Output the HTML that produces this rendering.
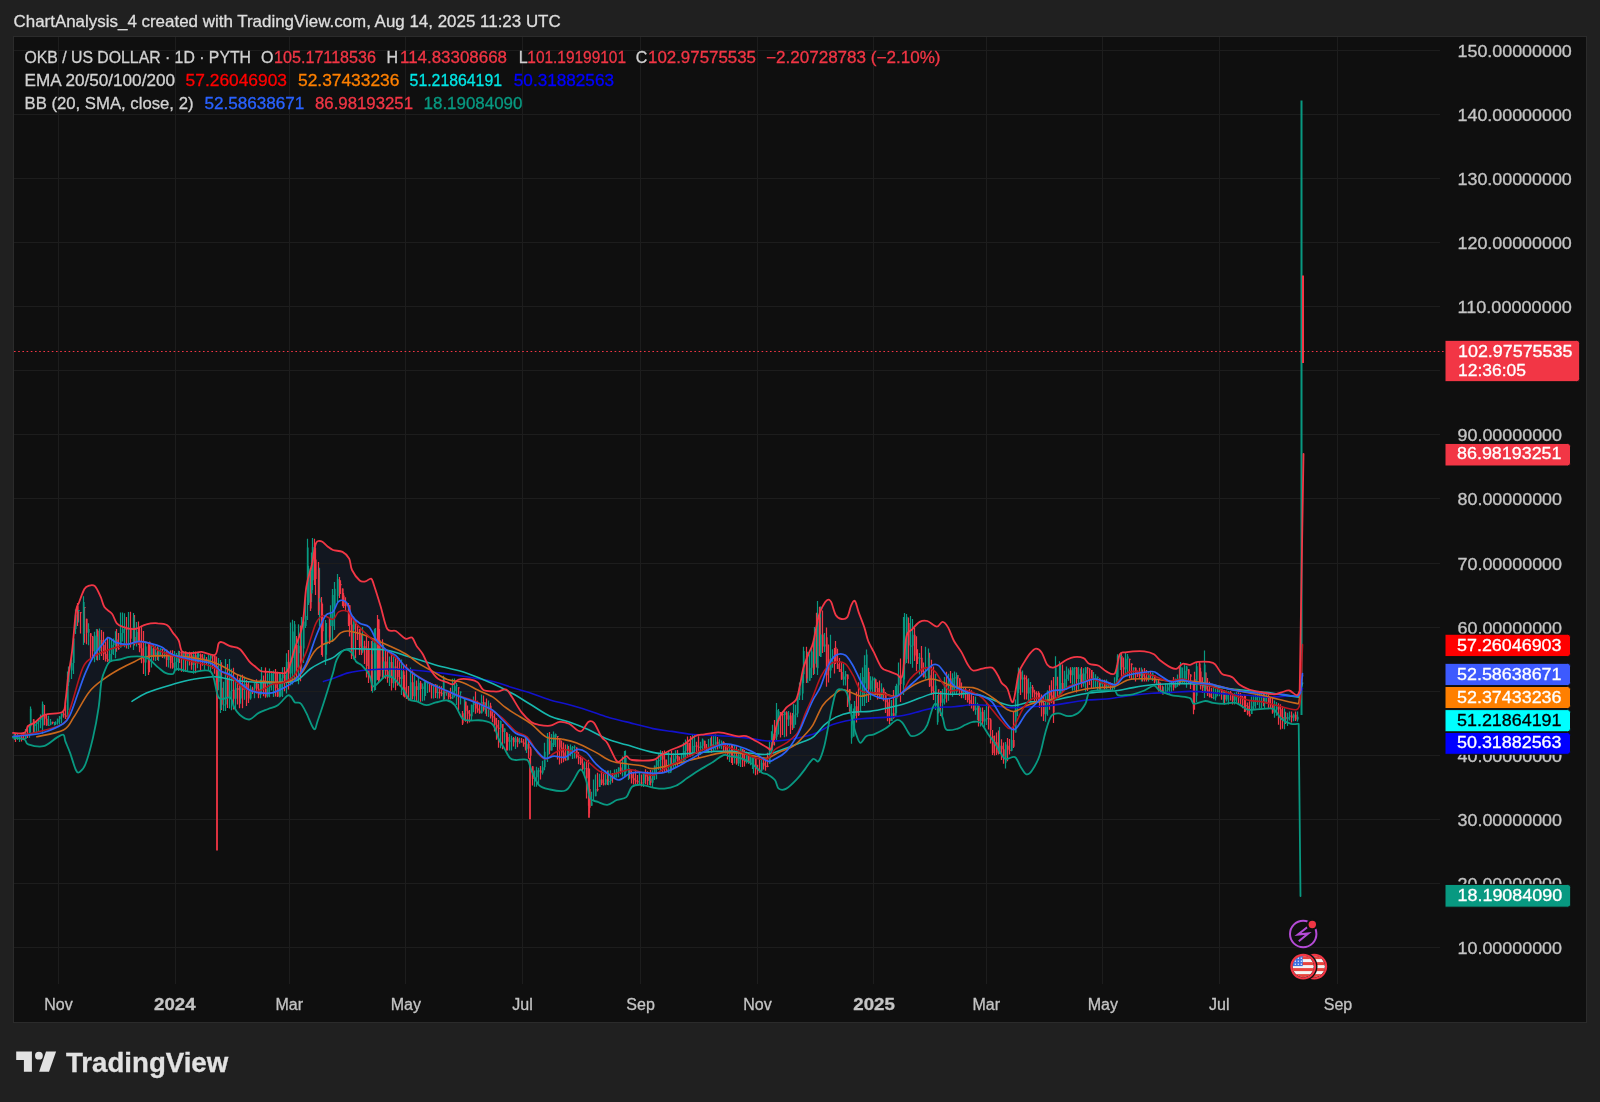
<!DOCTYPE html><html><head><meta charset="utf-8"><style>html,body{margin:0;padding:0}body{width:1600px;height:1102px;background:#202020;overflow:hidden;font-family:"Liberation Sans",sans-serif}svg{position:absolute;left:0;top:0}text{font-family:"Liberation Sans",sans-serif}</style></head><body>
<svg width="1600" height="1102" viewBox="0 0 1600 1102" style="will-change:transform">
<rect x="13.5" y="36.5" width="1573" height="986" fill="#0f0f0f" stroke="#2b2b2b" stroke-width="1"/>
<path d="M13.0 732.9C14.9 732.9 21.9 734.0 24.4 732.9C26.9 731.8 26.4 727.8 28.2 726.0C29.9 724.2 32.2 724.3 34.9 722.4C37.6 720.5 39.8 716.5 44.4 714.8C49.0 713.0 59.0 714.1 62.5 711.9C66.0 709.7 64.5 707.3 65.4 701.4C66.4 695.5 67.1 685.0 68.2 676.7C69.3 668.5 70.7 662.7 72.0 651.9C73.3 641.1 74.8 620.0 75.9 611.9C77.0 603.8 77.3 607.1 78.7 603.3C80.1 599.5 82.7 592.0 84.4 589.0C86.2 586.0 87.5 586.1 89.2 585.6C91.0 585.1 93.0 584.4 94.9 586.2C96.8 588.1 99.0 593.2 100.6 596.7C102.2 600.2 102.5 604.2 104.4 607.1C106.3 610.0 109.9 611.1 112.0 613.8C114.1 616.5 114.9 621.1 116.8 623.3C118.7 625.5 120.5 626.1 123.5 627.1C126.5 628.1 131.1 629.5 134.9 629.0C138.7 628.5 142.5 625.2 146.3 624.3C150.1 623.3 154.3 623.1 157.8 623.3C161.3 623.4 164.8 623.6 167.3 625.2C169.8 626.8 171.1 630.4 173.0 632.9C174.9 635.4 177.1 637.3 178.7 640.5C180.3 643.7 179.9 649.8 182.5 651.9C185.1 654.0 190.8 652.9 194.0 652.9C197.2 652.9 198.1 651.6 201.6 651.9C205.1 652.2 212.1 656.2 214.9 654.8C217.8 653.4 217.4 645.4 218.7 643.3C220.0 641.2 220.6 641.9 222.5 642.4C224.4 642.9 227.2 645.1 230.1 646.2C233.0 647.3 236.5 646.5 239.7 649.0C242.9 651.5 246.7 658.5 249.2 661.4C251.7 664.3 253.0 664.6 254.9 666.2C256.8 667.8 258.4 670.0 260.6 671.0C262.8 672.0 265.0 671.6 268.2 671.9C271.4 672.2 276.8 672.7 279.7 672.9C282.6 673.1 283.8 673.9 285.4 672.9C287.0 671.9 287.6 671.2 289.2 667.1C290.8 663.0 292.7 655.1 294.9 648.1C297.1 641.1 300.6 635.4 302.5 625.2C304.4 615.0 304.7 597.2 306.3 587.1C307.9 577.0 310.4 571.6 312.0 564.3C313.6 557.0 314.3 547.1 315.9 543.3C317.5 539.5 319.7 540.9 321.6 541.4C323.5 541.9 325.4 544.8 327.3 546.2C329.2 547.6 330.5 549.0 333.0 550.0C335.5 551.0 339.8 550.5 342.5 551.9C345.2 553.3 347.6 555.6 349.2 558.6C350.8 561.6 350.2 566.4 352.0 570.0C353.8 573.6 357.5 578.6 359.7 580.5C361.9 582.4 363.5 581.7 365.4 581.4C367.3 581.1 369.7 578.0 371.1 578.6C372.5 579.2 372.4 580.6 374.0 585.2C375.6 589.8 378.4 598.9 380.6 606.2C382.8 613.5 384.8 624.9 387.3 629.0C389.9 633.1 392.9 629.4 395.9 631.0C398.9 632.6 402.7 637.5 405.4 638.6C408.1 639.7 410.1 636.3 412.0 637.6C413.9 638.9 415.1 643.5 416.8 646.2C418.6 648.9 420.3 650.0 422.5 653.8C424.7 657.6 427.6 664.9 430.1 669.0C432.7 673.1 434.9 676.4 437.8 678.6C440.7 680.8 444.8 681.5 447.3 682.4C449.8 683.3 451.1 684.8 453.0 684.3C454.9 683.8 455.8 680.3 458.7 679.5C461.6 678.7 466.9 679.0 470.1 679.5C473.3 680.0 475.6 680.6 477.8 682.4C480.0 684.1 481.0 688.5 483.5 690.0C486.0 691.5 490.5 691.2 493.0 691.4C495.5 691.6 496.5 691.7 498.7 691.4C500.9 691.1 504.1 688.5 506.3 689.5C508.5 690.5 509.4 693.3 512.0 697.1C514.5 700.9 518.4 708.3 521.6 712.4C524.8 716.5 528.2 719.8 531.1 721.9C534.0 724.0 535.5 724.2 538.7 724.8C541.9 725.4 546.6 726.2 550.1 725.7C553.6 725.2 556.5 722.2 559.7 721.9C562.9 721.6 565.7 722.2 569.2 723.8C572.7 725.4 577.4 731.7 580.6 731.4C583.8 731.1 586.0 723.3 588.2 721.9C590.4 720.5 591.8 720.4 594.0 722.9C596.2 725.4 599.4 733.8 601.6 737.1C603.8 740.4 605.1 739.4 607.3 742.9C609.5 746.4 613.0 754.9 614.9 758.1C616.8 761.3 616.8 762.2 618.7 761.9C620.6 761.6 624.1 756.5 626.3 756.2C628.5 755.9 627.5 759.4 632.0 760.0C636.5 760.6 648.2 760.8 653.0 760.0C657.8 759.2 657.4 757.0 660.6 755.2C663.8 753.5 668.2 751.2 672.0 749.5C675.8 747.8 679.7 747.0 683.5 744.8C687.3 742.6 691.4 738.0 694.9 736.2C698.4 734.5 700.6 734.9 704.4 734.3C708.2 733.7 714.3 732.6 717.8 732.4C721.3 732.2 722.2 732.7 725.4 733.3C728.6 733.9 733.3 735.7 736.8 736.2C740.3 736.7 743.1 735.4 746.3 736.2C749.5 737.0 752.4 739.1 755.9 741.0C759.4 742.9 764.8 746.3 767.3 747.6C769.8 748.9 769.8 751.1 771.1 748.6C772.4 746.1 773.6 737.3 774.9 732.4C776.2 727.5 776.8 723.1 778.7 719.0C780.6 714.9 783.4 710.8 786.3 707.6C789.2 704.4 793.7 703.5 795.9 700.0C798.1 696.5 798.4 692.1 799.7 686.7C801.0 681.3 801.9 673.3 803.5 667.6C805.1 661.9 807.6 656.5 809.2 652.4C810.8 648.3 811.4 648.9 813.0 642.9C814.6 636.9 817.1 622.2 818.7 616.2C820.3 610.2 821.1 609.4 822.5 606.7C823.9 604.0 825.9 600.8 827.3 600.0C828.7 599.2 829.7 599.4 831.1 601.9C832.5 604.4 834.1 612.4 835.9 615.2C837.6 618.1 839.7 618.7 841.6 619.0C843.5 619.3 845.7 619.3 847.3 617.1C848.9 614.9 849.8 608.4 851.1 605.7C852.4 603.0 853.6 599.9 854.9 601.0C856.2 602.1 857.1 608.0 858.7 612.4C860.3 616.8 862.8 622.8 864.4 627.6C866.0 632.4 866.6 636.9 868.2 641.0C869.8 645.1 871.8 648.0 874.0 652.4C876.2 656.8 879.1 664.4 881.6 667.6C884.1 670.8 886.7 670.3 889.2 671.4C891.7 672.5 894.6 673.7 896.8 674.3C899.0 674.9 900.9 681.4 902.5 675.2C904.1 669.0 904.7 644.7 906.3 637.1C907.9 629.5 909.8 632.0 912.0 629.5C914.2 627.0 917.2 623.3 919.7 621.9C922.2 620.5 924.4 620.2 927.3 621.0C930.1 621.8 934.3 626.6 936.8 626.7C939.3 626.9 940.6 621.8 942.5 621.9C944.4 622.0 946.3 624.4 948.2 627.6C950.1 630.8 951.8 636.9 954.0 641.0C956.2 645.1 959.4 648.6 961.6 652.4C963.8 656.2 965.4 660.8 967.3 663.8C969.2 666.8 970.5 669.7 973.0 670.5C975.5 671.3 979.3 669.1 982.5 668.6C985.7 668.1 989.5 666.5 992.0 667.6C994.5 668.7 996.2 672.7 997.8 675.2C999.4 677.8 1000.0 680.7 1001.6 682.9C1003.2 685.1 1005.4 685.4 1007.3 688.6C1009.2 691.8 1011.1 704.5 1013.0 701.9C1014.9 699.3 1016.8 680.0 1018.7 673.3C1020.6 666.6 1022.5 665.2 1024.4 661.9C1026.3 658.6 1028.2 655.5 1030.1 653.3C1032.0 651.1 1034.0 648.8 1035.9 648.6C1037.8 648.5 1039.7 649.7 1041.6 652.4C1043.5 655.1 1045.4 662.3 1047.3 664.8C1049.2 667.3 1050.8 667.8 1053.0 667.6C1055.2 667.4 1058.4 665.1 1060.6 663.8C1062.8 662.5 1064.1 661.1 1066.3 660.0C1068.5 658.9 1071.1 657.4 1074.0 657.1C1076.9 656.8 1081.0 657.0 1083.5 658.1C1086.0 659.2 1086.7 662.5 1089.2 663.8C1091.7 665.1 1095.9 664.4 1098.7 665.7C1101.5 667.0 1103.6 670.1 1106.3 671.4C1109.0 672.7 1112.7 676.1 1114.9 673.3C1117.1 670.4 1118.0 657.8 1119.7 654.3C1121.5 650.8 1123.2 652.9 1125.4 652.4C1127.6 651.9 1129.8 651.6 1133.0 651.4C1136.2 651.2 1140.9 650.9 1144.4 651.4C1147.9 651.9 1151.5 652.9 1154.0 654.3C1156.5 655.7 1156.9 657.8 1159.7 660.0C1162.5 662.2 1168.2 666.2 1171.1 667.6C1173.9 669.0 1174.9 669.2 1176.8 668.6C1178.7 668.0 1180.3 664.4 1182.5 663.8C1184.7 663.2 1187.5 665.1 1190.1 664.8C1192.6 664.5 1194.0 662.2 1197.8 661.9C1201.6 661.6 1209.5 661.6 1213.0 662.9C1216.5 664.2 1217.1 667.6 1218.7 669.5C1220.3 671.4 1220.3 673.0 1222.5 674.3C1224.7 675.6 1229.1 675.4 1232.0 677.1C1234.9 678.9 1236.8 682.7 1239.7 684.8C1242.6 686.9 1245.4 688.2 1249.2 689.5C1253.0 690.8 1258.4 691.6 1262.5 692.4C1266.6 693.2 1270.8 694.3 1274.0 694.3C1277.2 694.3 1279.1 693.0 1281.6 692.4C1284.1 691.8 1286.7 690.0 1289.2 690.5C1291.7 691.0 1295.0 695.2 1296.8 695.2C1298.5 695.2 1299.2 691.3 1299.7 690.5L1298.7 723.8L1298.7 723.8C1297.4 723.8 1293.9 724.6 1291.1 723.8C1288.2 723.0 1284.4 721.4 1281.6 719.0C1278.8 716.6 1276.5 711.2 1274.0 709.5C1271.5 707.8 1269.5 708.6 1266.3 708.6C1263.1 708.6 1258.1 709.4 1254.9 709.5C1251.7 709.6 1250.5 710.6 1247.3 709.5C1244.1 708.4 1239.7 703.9 1235.9 702.9C1232.1 701.9 1228.2 703.8 1224.4 703.8C1220.6 703.8 1216.2 703.4 1213.0 702.9C1209.8 702.4 1208.6 700.9 1205.4 701.0C1202.2 701.1 1196.5 704.3 1194.0 703.8C1191.5 703.3 1192.6 699.4 1190.1 698.1C1187.5 696.8 1181.9 696.7 1178.7 696.2C1175.5 695.7 1174.3 696.2 1171.1 695.2C1167.9 694.2 1162.5 692.1 1159.7 690.5C1156.9 688.9 1156.5 685.7 1154.0 685.7C1151.5 685.7 1147.9 689.1 1144.4 690.5C1140.9 691.9 1136.2 693.5 1133.0 694.3C1129.8 695.1 1127.9 695.1 1125.4 695.2C1122.9 695.4 1119.7 696.0 1117.8 695.2C1115.9 694.4 1117.2 691.3 1114.0 690.5C1110.8 689.7 1102.8 690.2 1098.7 690.5C1094.6 690.8 1091.4 690.2 1089.2 692.4C1087.0 694.6 1087.3 700.3 1085.4 703.8C1083.5 707.3 1080.7 711.2 1077.8 713.3C1074.9 715.4 1071.4 716.2 1068.2 716.2C1065.0 716.2 1061.6 713.3 1058.7 713.3C1055.8 713.3 1053.3 713.0 1051.1 716.2C1048.9 719.4 1047.3 725.9 1045.4 732.4C1043.5 738.9 1041.9 748.9 1039.7 755.2C1037.5 761.6 1034.2 767.3 1032.0 770.5C1029.8 773.7 1028.2 774.9 1026.3 774.3C1024.4 773.7 1022.5 769.6 1020.6 766.7C1018.7 763.8 1017.4 758.4 1014.9 757.1C1012.4 755.8 1007.9 760.0 1005.4 759.0C1002.9 758.0 1001.6 754.2 999.7 751.4C997.8 748.5 995.9 744.8 994.0 741.9C992.1 739.0 990.4 737.5 988.2 734.3C986.0 731.1 983.1 725.0 980.6 722.9C978.1 720.8 975.5 721.6 973.0 721.9C970.5 722.2 967.9 723.7 965.4 724.8C962.9 725.9 961.0 727.8 957.8 728.6C954.6 729.4 948.8 731.4 946.3 729.5C943.8 727.6 944.4 721.4 942.5 717.1C940.6 712.8 937.4 702.5 934.9 703.8C932.4 705.1 929.5 720.0 927.3 724.8C925.1 729.6 924.1 730.5 921.6 732.4C919.1 734.3 914.2 736.2 912.0 736.2C909.8 736.2 909.8 734.6 908.2 732.4C906.6 730.2 904.4 725.0 902.5 722.9C900.6 720.8 899.6 719.0 896.8 720.0C893.9 721.0 889.2 726.2 885.4 728.6C881.6 731.0 877.2 733.0 874.0 734.3C870.8 735.6 868.5 734.8 866.3 736.2C864.1 737.6 862.2 742.9 860.6 742.9C859.0 742.9 858.1 739.5 856.8 736.2C855.5 732.9 854.6 729.9 853.0 722.9C851.4 715.9 849.2 699.9 847.3 694.3C845.4 688.7 843.5 689.8 841.6 689.5C839.7 689.2 837.8 687.8 835.9 692.4C834.0 697.0 832.0 708.2 830.1 717.1C828.2 726.0 826.3 738.4 824.4 745.7C822.5 753.0 820.6 758.8 818.7 761.0C816.8 763.2 815.2 757.7 813.0 759.0C810.8 760.3 807.9 765.4 805.4 768.6C802.9 771.8 801.0 774.8 797.8 778.1C794.6 781.4 789.5 786.9 786.3 788.6C783.1 790.4 780.6 790.0 778.7 788.6C776.8 787.2 776.8 782.4 774.9 780.0C773.0 777.6 769.5 775.6 767.3 774.3C765.1 773.0 764.1 774.1 761.6 772.4C759.1 770.6 755.5 766.2 752.0 763.8C748.5 761.4 744.4 759.4 740.6 758.1C736.8 756.8 732.1 756.7 729.2 756.2C726.4 755.7 726.7 753.9 723.5 755.2C720.3 756.5 714.2 761.2 710.1 763.8C706.0 766.3 702.5 768.1 698.7 770.5C694.9 772.9 691.1 775.6 687.3 778.1C683.5 780.6 679.7 784.0 675.9 785.7C672.1 787.5 668.2 788.3 664.4 788.6C660.6 788.9 656.8 788.2 653.0 787.6C649.2 787.0 645.1 784.9 641.6 784.8C638.1 784.6 634.5 784.7 632.0 786.7C629.5 788.8 628.8 794.9 626.3 797.1C623.8 799.3 620.0 798.7 616.8 800.0C613.6 801.3 610.5 804.5 607.3 804.8C604.1 805.1 600.7 803.0 597.8 801.9C594.9 800.8 592.0 801.6 590.1 798.1C588.2 794.6 587.9 785.8 586.3 781.0C584.7 776.2 582.8 769.5 580.6 769.5C578.4 769.5 575.5 777.5 573.0 781.0C570.5 784.5 569.2 789.1 565.4 790.5C561.6 791.9 554.5 790.5 550.1 789.5C545.7 788.5 541.9 788.1 538.7 784.8C535.5 781.5 533.0 773.6 531.1 769.5C529.2 765.4 529.8 761.6 527.3 760.0C524.8 758.4 518.8 760.3 515.9 760.0C513.0 759.7 512.0 760.0 510.1 758.1C508.2 756.2 506.3 751.8 504.4 748.6C502.5 745.4 500.6 743.0 498.7 739.0C496.8 735.0 495.9 727.9 493.0 724.8C490.1 721.7 485.4 721.2 481.6 720.5C477.8 719.8 473.3 720.8 470.1 720.5C466.9 720.2 465.0 721.1 462.5 718.6C460.0 716.1 457.4 708.2 454.9 705.2C452.4 702.2 450.5 701.0 447.3 700.5C444.1 700.0 439.4 701.6 435.9 702.4C432.4 703.2 429.5 705.4 426.3 705.2C423.1 705.0 419.7 702.4 416.8 701.4C413.9 700.4 411.4 701.4 409.2 699.5C407.0 697.6 406.0 693.5 403.5 690.0C401.0 686.5 396.9 681.0 394.0 678.6C391.1 676.2 388.9 675.1 386.3 675.7C383.8 676.3 380.9 680.6 378.7 682.4C376.5 684.1 374.6 687.5 373.0 686.2C371.4 684.9 371.1 678.3 369.2 674.8C367.3 671.3 363.8 667.4 361.6 665.2C359.4 663.0 357.5 663.5 355.9 661.4C354.3 659.3 353.9 654.8 352.0 652.9C350.1 651.0 346.9 648.9 344.4 650.0C341.9 651.1 338.7 655.7 336.8 659.5C334.9 663.3 334.9 666.5 333.0 672.9C331.1 679.2 327.9 689.7 325.4 697.6C322.9 705.5 319.7 715.3 317.8 720.5C315.9 725.7 315.9 730.3 314.0 729.0C312.1 727.7 308.5 717.2 306.3 712.9C304.1 708.6 302.5 705.0 300.6 703.3C298.7 701.5 296.5 703.5 294.9 702.4C293.3 701.3 292.4 697.8 291.1 696.7C289.8 695.6 289.5 694.3 287.3 695.7C285.1 697.1 281.0 703.0 277.8 705.2C274.6 707.4 271.4 707.7 268.2 709.0C265.0 710.3 261.9 711.1 258.7 712.9C255.5 714.6 252.4 719.2 249.2 719.5C246.0 719.8 242.2 716.9 239.7 714.8C237.2 712.7 235.6 709.9 234.0 707.0C232.4 704.1 232.7 699.2 230.1 697.6C227.5 696.0 221.9 701.9 218.7 697.6C215.5 693.3 215.4 676.3 211.0 672.0C206.6 667.7 197.7 672.5 192.0 672.0C186.3 671.5 180.0 668.7 176.8 669.0C173.6 669.3 174.9 673.1 173.0 673.8C171.1 674.4 167.9 674.0 165.4 672.9C162.9 671.8 161.0 669.6 157.8 667.1C154.6 664.6 150.8 659.3 146.3 657.6C141.9 655.9 135.5 656.4 131.1 656.7C126.7 657.0 123.2 658.7 119.7 659.5C116.2 660.3 112.3 660.1 110.1 661.4C107.9 662.7 107.7 663.9 106.3 667.1C104.9 670.3 102.9 673.8 101.6 680.5C100.3 687.2 100.1 697.6 98.7 707.1C97.3 716.6 95.2 728.1 93.0 737.6C90.8 747.1 87.6 758.6 85.4 764.3C83.2 770.0 81.3 770.9 79.7 771.9C78.1 772.9 77.5 773.2 75.9 770.0C74.3 766.8 71.8 757.7 70.1 752.9C68.3 748.1 66.5 744.4 65.4 741.4C64.3 738.4 64.9 735.4 63.5 734.8C62.1 734.2 60.1 735.7 56.8 737.6C53.5 739.5 48.3 745.1 43.5 746.2C38.7 747.3 31.4 745.4 28.2 744.3C25.0 743.2 26.9 740.6 24.4 739.5C21.9 738.4 14.9 737.9 13.0 737.6Z" fill="#2d5fb9" fill-opacity="0.1" stroke="none"/>
<path d="M14 947.5H1440 M14 883.5H1440 M14 819.5H1440 M14 755.5H1440 M14 691.5H1440 M14 627.5H1440 M14 563.5H1440 M14 498.5H1440 M14 434.5H1440 M14 370.5H1440 M14 306.5H1440 M14 242.5H1440 M14 178.5H1440 M14 114.5H1440 M14 50.5H1440 M58.5 37V984 M175.5 37V984 M289.5 37V984 M405.5 37V984 M522.5 37V984 M640.5 37V984 M757.5 37V984 M873.5 37V984 M986.5 37V984 M1102.5 37V984 M1219.5 37V984 M1337.5 37V984" stroke="#1d1d1d" stroke-width="1" fill="none"/>
<path d="M15.5 733.7V742.1 M21.5 734.4V741.5 M23.5 732.0V739.5 M27.5 725.4V737.9 M33.5 719.3V733.0 M44.5 705.1V725.2 M46.5 714.9V725.8 M52.5 721.8V724.3 M63.5 711.6V717.7 M65.5 705.1V719.1 M80.5 612.0V633.4 M84.5 606.9V642.7 M86.5 618.7V644.2 M90.5 633.3V658.3 M92.5 636.1V658.3 M97.5 629.2V660.6 M101.5 630.0V656.0 M103.5 631.8V659.9 M105.5 641.6V661.6 M107.5 636.7V662.1 M116.5 628.9V651.8 M118.5 632.9V649.8 M126.5 617.1V648.5 M130.5 611.7V647.4 M134.5 615.0V645.4 M139.5 628.1V652.3 M141.5 625.7V663.2 M143.5 630.9V673.9 M149.5 641.8V672.3 M153.5 644.8V660.6 M157.5 646.6V660.1 M162.5 648.9V657.9 M166.5 649.7V666.8 M170.5 650.4V668.5 M172.5 650.2V668.8 M179.5 651.0V662.9 M181.5 651.2V671.7 M185.5 651.4V671.9 M189.5 651.7V665.6 M191.5 652.2V669.8 M195.5 651.5V673.3 M200.5 653.4V670.7 M202.5 654.0V665.7 M206.5 657.1V664.0 M212.5 655.3V668.7 M214.5 655.5V673.8 M216.5 656.4V682.6 M221.5 662.3V709.9 M227.5 664.0V708.0 M233.5 667.7V709.4 M237.5 674.8V704.5 M239.5 678.3V708.2 M242.5 674.8V708.2 M246.5 679.9V705.9 M248.5 681.3V703.0 M252.5 686.8V693.9 M256.5 679.2V693.6 M258.5 683.8V698.3 M263.5 675.4V696.2 M265.5 667.6V697.7 M275.5 668.9V696.5 M277.5 671.8V697.1 M284.5 666.9V691.2 M288.5 649.9V689.5 M300.5 625.6V681.3 M315.5 547.9V595.1 M322.5 604.1V656.8 M340.5 580.6V594.1 M342.5 588.4V606.2 M345.5 597.3V611.3 M349.5 605.2V636.6 M355.5 620.3V658.0 M357.5 624.9V640.1 M359.5 629.0V655.0 M361.5 634.8V655.0 M364.5 640.8V664.0 M366.5 636.3V677.5 M378.5 619.3V683.3 M382.5 639.2V678.3 M385.5 649.5V678.8 M387.5 650.8V682.7 M391.5 653.3V690.6 M395.5 658.0V690.2 M397.5 657.0V685.8 M399.5 658.2V686.3 M403.5 665.5V696.4 M404.5 674.9V697.6 M406.5 664.2V699.0 M408.5 686.1V700.4 M412.5 669.9V699.6 M416.5 680.5V701.6 M420.5 681.0V701.8 M429.5 682.3V692.3 M431.5 682.9V698.6 M435.5 684.2V698.1 M439.5 685.7V698.5 M441.5 686.2V696.2 M444.5 688.7V699.4 M448.5 690.9V699.4 M450.5 687.8V699.2 M458.5 687.3V710.3 M465.5 701.4V721.7 M467.5 705.6V723.5 M469.5 709.9V722.5 M475.5 691.4V713.8 M477.5 700.8V712.7 M479.5 702.7V713.7 M483.5 695.4V711.5 M486.5 698.5V716.3 M490.5 702.8V718.6 M492.5 709.6V722.3 M494.5 713.6V731.4 M496.5 717.9V739.7 M498.5 720.1V747.8 M502.5 724.0V749.2 M506.5 732.3V750.7 M507.5 733.2V750.6 M513.5 737.0V746.5 M517.5 737.1V747.2 M521.5 738.0V742.6 M523.5 738.9V746.8 M525.5 735.8V750.6 M528.5 739.7V758.7 M530.5 746.8V769.1 M532.5 766.3V785.4 M540.5 766.0V779.4 M549.5 732.0V754.2 M557.5 735.9V759.4 M559.5 738.3V764.4 M561.5 740.4V763.2 M563.5 742.5V762.3 M565.5 744.4V760.6 M568.5 746.0V759.8 M576.5 747.5V758.5 M578.5 751.9V764.3 M580.5 756.4V765.1 M582.5 758.3V770.6 M586.5 761.6V798.6 M588.5 759.8V805.8 M589.5 768.5V813.5 M597.5 772.8V791.5 M601.5 770.4V784.9 M603.5 773.4V785.6 M607.5 770.4V785.0 M612.5 773.1V782.7 M620.5 762.8V774.2 M629.5 769.3V778.8 M631.5 770.2V783.5 M633.5 772.6V784.6 M635.5 769.4V784.6 M637.5 775.0V784.5 M641.5 774.5V786.6 M645.5 769.3V784.3 M647.5 771.2V785.6 M650.5 770.1V785.6 M662.5 751.1V772.8 M664.5 750.6V772.4 M666.5 759.4V772.4 M671.5 750.7V771.0 M677.5 750.1V765.7 M679.5 756.4V764.0 M687.5 736.6V757.9 M689.5 742.8V756.7 M690.5 735.9V756.7 M696.5 741.7V754.0 M698.5 736.2V757.8 M704.5 740.7V750.6 M706.5 743.9V751.6 M711.5 736.3V752.7 M717.5 736.9V749.5 M723.5 741.3V751.9 M725.5 743.3V753.4 M727.5 744.2V759.4 M731.5 744.6V762.9 M732.5 745.1V764.9 M736.5 746.3V764.7 M742.5 748.9V767.1 M744.5 750.1V766.5 M748.5 752.7V763.8 M755.5 758.4V775.3 M757.5 764.8V774.5 M759.5 758.4V772.8 M763.5 758.5V769.5 M765.5 760.2V770.8 M767.5 752.8V767.2 M774.5 720.0V745.6 M780.5 711.9V737.4 M782.5 711.5V735.0 M786.5 711.3V736.4 M790.5 712.6V734.0 M792.5 712.9V729.9 M816.5 612.8V667.4 M822.5 610.5V653.1 M828.5 644.5V682.6 M834.5 648.0V673.4 M837.5 648.7V669.0 M839.5 658.0V672.1 M841.5 662.3V679.8 M847.5 674.6V707.0 M849.5 689.2V711.7 M856.5 691.7V722.5 M858.5 682.3V716.1 M868.5 667.8V702.1 M875.5 679.2V694.7 M877.5 682.2V699.4 M879.5 680.5V699.1 M883.5 687.5V701.3 M885.5 692.0V713.1 M887.5 698.9V721.2 M889.5 698.3V724.0 M893.5 690.1V718.7 M900.5 658.6V701.9 M908.5 617.4V663.6 M914.5 628.1V660.9 M916.5 636.2V671.3 M917.5 649.2V664.1 M921.5 645.9V675.6 M923.5 662.5V677.4 M929.5 652.7V686.9 M931.5 659.7V694.8 M933.5 666.6V699.9 M938.5 689.4V713.6 M940.5 690.9V716.0 M946.5 671.7V702.6 M950.5 671.0V695.3 M957.5 675.0V691.5 M959.5 678.2V695.9 M961.5 682.4V698.2 M965.5 687.6V700.1 M967.5 689.9V702.4 M969.5 689.1V706.1 M971.5 690.3V708.6 M973.5 696.1V711.3 M978.5 705.6V726.6 M982.5 707.6V726.3 M988.5 704.4V729.5 M990.5 718.2V743.5 M994.5 735.6V755.5 M996.5 732.5V755.0 M998.5 730.4V754.5 M1001.5 739.3V759.9 M1003.5 742.4V763.8 M1007.5 738.1V761.2 M1009.5 738.9V754.5 M1013.5 712.1V747.9 M1020.5 668.2V695.0 M1024.5 674.8V699.4 M1026.5 675.6V699.5 M1032.5 685.0V697.5 M1034.5 689.8V702.4 M1036.5 691.2V702.8 M1038.5 691.2V702.5 M1039.5 692.8V707.9 M1041.5 694.4V716.5 M1043.5 696.0V721.1 M1049.5 685.3V709.8 M1051.5 680.3V703.2 M1057.5 676.8V697.3 M1062.5 664.4V692.0 M1070.5 667.2V683.2 M1076.5 667.1V692.6 M1081.5 667.1V687.7 M1087.5 667.1V691.1 M1089.5 668.2V685.0 M1091.5 669.9V688.5 M1099.5 678.6V689.4 M1104.5 679.8V689.5 M1110.5 682.4V690.3 M1121.5 653.1V678.8 M1123.5 657.6V676.8 M1129.5 658.8V678.3 M1131.5 663.6V680.1 M1135.5 667.6V681.5 M1137.5 670.6V677.1 M1139.5 667.7V678.8 M1142.5 669.6V681.5 M1144.5 667.9V681.5 M1146.5 670.0V681.5 M1150.5 670.8V678.8 M1154.5 674.9V683.2 M1158.5 680.1V691.5 M1160.5 682.6V692.2 M1162.5 685.4V694.4 M1173.5 677.0V690.5 M1179.5 666.0V685.6 M1188.5 669.3V683.9 M1190.5 674.3V688.9 M1194.5 671.8V709.7 M1200.5 667.7V689.6 M1202.5 677.3V693.1 M1205.5 672.6V692.5 M1207.5 677.9V695.9 M1209.5 681.8V697.4 M1211.5 687.7V698.3 M1221.5 689.2V699.7 M1224.5 690.0V704.5 M1230.5 690.9V700.6 M1232.5 693.2V704.5 M1238.5 692.3V704.5 M1240.5 692.7V704.8 M1242.5 696.1V708.3 M1244.5 694.8V711.9 M1245.5 695.7V711.8 M1247.5 702.4V715.2 M1249.5 701.2V716.4 M1263.5 693.7V706.2 M1268.5 694.6V708.6 M1270.5 698.0V708.2 M1272.5 697.1V713.8 M1278.5 703.2V724.7 M1280.5 704.3V729.6 M1282.5 706.3V728.8 M1285.5 711.8V723.9 M1291.5 711.5V722.6 M1295.5 711.6V721.0 M77.5 602.9V626.0 M138.5 621.4V645.0 M148.5 642.0V675.0 M296.5 636.0V678.0 M310.5 572.0V611.0 M314.5 538.8V585.0 M318.5 562.0V615.0 M321.5 597.0V655.0 M329.5 618.0V644.0 M339.5 577.0V598.0 M343.5 593.0V608.0 M348.5 603.0V626.0 M351.5 614.0V659.0 M368.5 641.0V683.0 M371.5 641.0V691.0 M377.5 615.0V680.0 M379.5 629.0V682.0 M462.5 711.0V725.0 M806.5 646.7V683.0 M813.5 642.9V675.0 M819.5 606.7V656.0 M826.5 627.6V686.7 M835.5 641.0V664.0 M992.5 730.0V755.0 M1053.5 677.0V723.0 M1193.5 681.0V714.3 M1199.5 662.0V683.0" stroke="#f23645" stroke-width="1.2" fill="none"/>
<path d="M14.5 733.7V740.0 M17.5 733.7V740.0 M19.5 735.7V742.1 M25.5 729.0V739.1 M29.5 724.2V737.8 M34.5 721.6V732.7 M36.5 721.0V732.0 M38.5 719.7V731.8 M40.5 714.5V728.3 M48.5 715.8V725.8 M50.5 718.9V725.2 M54.5 721.9V725.4 M55.5 721.3V725.0 M57.5 718.6V724.7 M59.5 716.1V724.4 M61.5 713.5V722.9 M71.5 659.5V678.9 M73.5 637.8V673.9 M78.5 610.1V622.6 M88.5 623.3V645.2 M94.5 631.7V662.3 M99.5 628.5V659.9 M109.5 638.1V661.8 M111.5 638.4V661.6 M113.5 638.5V655.1 M115.5 631.3V658.3 M120.5 612.6V647.4 M122.5 612.4V641.6 M124.5 613.3V647.2 M128.5 611.9V648.9 M136.5 621.9V646.5 M145.5 641.3V676.0 M151.5 645.4V667.6 M155.5 645.9V661.1 M158.5 647.4V661.1 M160.5 648.2V655.9 M164.5 649.5V658.6 M168.5 651.0V667.6 M174.5 651.0V670.0 M176.5 652.9V670.4 M178.5 650.8V670.9 M183.5 651.2V672.1 M187.5 652.2V671.4 M193.5 651.2V673.7 M197.5 652.4V668.2 M198.5 652.8V662.9 M204.5 654.5V669.8 M208.5 654.9V671.0 M210.5 655.0V671.5 M218.5 658.1V690.2 M223.5 681.8V710.9 M225.5 659.1V710.9 M229.5 659.1V708.6 M231.5 668.7V710.3 M235.5 680.7V708.4 M240.5 674.8V703.8 M244.5 676.6V699.8 M250.5 685.2V699.8 M254.5 682.9V698.3 M260.5 679.5V698.2 M261.5 667.0V692.6 M267.5 673.2V697.5 M269.5 668.4V697.3 M271.5 671.1V690.5 M273.5 670.5V697.0 M279.5 672.4V697.2 M280.5 673.7V696.7 M282.5 667.3V697.1 M286.5 653.2V693.5 M290.5 622.5V685.5 M292.5 619.7V684.4 M298.5 624.3V684.2 M301.5 616.9V669.6 M305.5 595.4V627.9 M311.5 552.6V602.0 M319.5 567.7V626.1 M326.5 623.1V654.7 M330.5 605.2V640.7 M334.5 582.1V630.0 M353.5 616.5V659.6 M362.5 627.0V653.3 M372.5 638.1V692.8 M374.5 628.8V690.8 M383.5 644.7V678.4 M389.5 656.5V686.0 M393.5 656.8V687.7 M401.5 659.6V695.1 M410.5 667.5V700.9 M414.5 672.8V701.5 M418.5 677.0V701.7 M422.5 683.4V701.2 M424.5 681.3V700.5 M425.5 681.1V696.0 M427.5 681.7V693.0 M433.5 684.0V698.6 M437.5 684.7V698.5 M446.5 689.8V695.7 M452.5 678.8V699.1 M454.5 678.6V697.6 M456.5 683.0V704.9 M460.5 691.5V704.5 M464.5 697.8V719.5 M471.5 704.6V720.9 M473.5 696.6V712.2 M481.5 694.4V713.5 M485.5 702.2V713.7 M488.5 700.6V716.9 M500.5 720.4V748.3 M504.5 728.2V743.4 M509.5 734.1V750.6 M511.5 735.8V750.6 M515.5 736.3V749.1 M519.5 737.8V743.8 M526.5 736.3V752.9 M534.5 770.4V786.7 M536.5 766.8V786.7 M538.5 767.7V783.9 M542.5 760.8V774.6 M544.5 742.8V770.3 M547.5 733.6V757.1 M551.5 734.1V750.4 M555.5 733.6V747.0 M567.5 744.4V760.2 M570.5 744.4V756.2 M572.5 746.1V759.0 M574.5 745.3V758.6 M584.5 761.6V775.7 M591.5 791.7V805.7 M593.5 779.6V800.9 M595.5 774.6V796.2 M599.5 773.7V786.9 M605.5 770.4V785.3 M608.5 770.4V785.3 M610.5 770.2V784.6 M614.5 769.4V779.1 M616.5 769.0V777.8 M618.5 767.4V777.2 M622.5 756.5V776.5 M624.5 751.1V776.1 M628.5 764.0V780.1 M639.5 772.1V784.8 M643.5 771.9V787.0 M649.5 774.3V785.0 M652.5 770.3V787.6 M654.5 765.4V780.0 M656.5 759.8V779.3 M658.5 754.3V770.1 M660.5 750.2V771.3 M668.5 751.0V773.0 M670.5 757.5V772.8 M673.5 753.3V768.4 M675.5 750.2V767.5 M681.5 753.8V762.5 M683.5 742.4V761.2 M685.5 739.5V759.8 M692.5 734.5V756.3 M694.5 734.7V754.2 M700.5 741.8V755.0 M702.5 738.5V751.1 M708.5 738.9V752.6 M710.5 737.7V750.1 M713.5 735.2V750.7 M715.5 734.6V749.7 M719.5 739.2V748.6 M721.5 740.4V749.3 M729.5 743.9V761.9 M734.5 745.7V763.5 M738.5 748.9V765.9 M740.5 747.6V767.1 M746.5 751.4V763.5 M750.5 755.8V765.2 M752.5 755.9V768.9 M753.5 757.5V773.4 M761.5 758.5V772.2 M769.5 740.4V763.6 M771.5 731.2V754.5 M772.5 724.8V750.8 M778.5 708.9V734.6 M784.5 711.2V737.2 M788.5 711.1V726.1 M793.5 703.9V728.1 M795.5 704.8V724.8 M797.5 693.8V717.2 M799.5 682.6V700.0 M807.5 651.8V682.1 M809.5 654.3V680.7 M811.5 648.3V678.1 M814.5 626.9V674.0 M820.5 606.4V657.1 M824.5 633.0V652.0 M830.5 634.7V678.1 M832.5 649.2V667.8 M843.5 663.7V685.6 M845.5 671.0V685.5 M853.5 708.4V736.4 M854.5 701.0V728.0 M860.5 672.9V711.5 M864.5 655.3V706.0 M870.5 676.3V700.0 M872.5 676.4V694.6 M874.5 677.6V691.9 M881.5 683.2V698.8 M891.5 700.0V721.0 M895.5 686.0V715.9 M896.5 683.7V713.2 M898.5 662.6V694.6 M904.5 612.9V679.6 M910.5 616.1V663.9 M912.5 619.0V667.7 M919.5 653.0V674.6 M925.5 646.8V679.2 M935.5 674.0V709.9 M942.5 689.0V715.8 M944.5 676.9V704.6 M948.5 673.7V700.7 M952.5 673.3V696.7 M954.5 671.5V694.8 M956.5 672.4V694.6 M963.5 687.7V698.3 M975.5 696.4V714.7 M977.5 702.7V720.3 M980.5 707.4V726.6 M984.5 709.9V727.5 M986.5 702.4V725.1 M999.5 727.0V754.0 M1011.5 728.2V751.2 M1015.5 699.4V732.6 M1017.5 680.0V716.2 M1022.5 670.6V692.4 M1028.5 678.3V701.2 M1030.5 681.9V702.2 M1045.5 695.2V721.8 M1047.5 690.5V715.8 M1059.5 661.2V696.1 M1060.5 663.3V694.2 M1064.5 670.8V691.0 M1066.5 666.5V689.9 M1068.5 668.5V680.7 M1072.5 667.1V690.8 M1074.5 667.3V690.4 M1078.5 667.0V689.8 M1080.5 668.5V683.8 M1083.5 668.2V686.8 M1085.5 667.1V691.4 M1093.5 672.1V689.1 M1095.5 674.2V687.7 M1097.5 676.4V690.5 M1100.5 680.2V689.7 M1102.5 679.6V687.3 M1106.5 679.6V689.0 M1108.5 682.9V688.0 M1112.5 683.3V690.4 M1114.5 677.3V689.6 M1116.5 665.6V685.1 M1120.5 654.5V670.0 M1125.5 652.2V676.6 M1127.5 653.9V676.5 M1133.5 667.5V679.4 M1141.5 667.5V681.5 M1148.5 671.9V681.4 M1152.5 672.5V681.0 M1156.5 679.9V685.3 M1163.5 686.4V694.4 M1165.5 683.4V693.5 M1167.5 683.9V694.4 M1169.5 682.6V694.4 M1171.5 679.9V692.5 M1175.5 678.4V688.3 M1177.5 674.5V686.8 M1182.5 667.4V683.6 M1184.5 663.5V684.3 M1186.5 665.7V687.7 M1213.5 687.0V699.3 M1215.5 688.5V700.5 M1217.5 688.3V696.2 M1219.5 688.6V696.2 M1223.5 689.9V703.2 M1226.5 690.6V701.4 M1228.5 690.9V704.5 M1234.5 692.8V704.5 M1236.5 691.9V702.2 M1251.5 696.6V714.1 M1253.5 694.9V709.8 M1255.5 694.3V708.6 M1257.5 692.4V704.9 M1259.5 692.4V708.6 M1261.5 692.4V708.6 M1264.5 692.4V708.6 M1266.5 693.5V703.8 M1274.5 700.5V717.7 M1276.5 702.1V715.7 M1284.5 708.3V729.2 M1287.5 712.7V726.0 M1289.5 711.5V720.5 M1293.5 713.6V721.2 M1297.5 711.6V721.4 M30.5 706.5V732.6 M42.5 701.6V733.7 M67.5 671.5V719.0 M68.5 666.6V686.0 M75.5 609.4V634.0 M83.5 596.3V645.0 M96.5 629.0V660.0 M133.5 612.9V650.0 M220.5 660.0V713.0 M294.5 621.0V682.0 M303.5 614.7V663.0 M307.5 538.8V620.0 M308.5 565.7V605.0 M312.5 538.0V590.0 M325.5 620.0V665.0 M332.5 589.0V642.0 M337.5 574.0V602.0 M375.5 628.0V690.0 M443.5 675.7V700.0 M547.5 733.0V762.0 M553.5 731.4V747.0 M625.5 750.5V775.0 M776.5 702.9V740.0 M802.5 675.2V700.0 M803.5 646.7V682.9 M817.5 601.0V675.0 M851.5 704.0V743.8 M862.5 667.6V706.0 M866.5 649.5V703.0 M903.5 617.0V695.0 M906.5 614.0V663.0 M928.5 648.6V680.0 M937.5 695.0V724.8 M1005.5 742.0V768.6 M1018.5 667.6V693.0 M1055.5 656.2V698.0 M1117.5 654.3V680.0 M1180.5 662.0V683.0 M1196.5 662.0V702.0 M1204.5 650.5V698.0" stroke="#089981" stroke-width="1.2" fill="none"/>
<path d="M15.75 736.6V737.8 M21.75 737.2V738.4 M23.75 738.0V739.3 M27.75 733.4V735.3 M33.75 719.3V726.1 M44.75 715.0V718.8 M46.75 718.8V725.5 M52.75 721.8V723.0 M63.75 713.6V715.2 M65.75 715.2V717.1 M80.75 612.0V613.2 M84.75 606.9V608.1 M86.75 618.7V632.7 M90.75 633.3V636.6 M92.75 636.6V651.3 M97.75 630.7V650.7 M101.75 640.1V645.1 M103.75 645.1V654.0 M105.75 654.0V658.9 M107.75 658.9V661.3 M116.75 639.5V648.0 M118.75 648.0V649.2 M126.75 628.5V629.7 M130.75 627.9V638.8 M134.75 637.0V642.7 M139.75 642.3V648.2 M141.75 648.2V658.2 M143.75 658.2V662.6 M149.75 641.8V655.0 M153.75 648.6V656.1 M157.75 652.5V656.8 M162.75 648.9V650.1 M166.75 649.8V659.9 M170.75 652.9V662.9 M172.75 662.9V667.8 M179.75 652.0V653.2 M181.75 652.9V656.9 M185.75 651.6V660.5 M189.75 653.9V655.6 M191.75 655.6V665.0 M195.75 655.3V663.2 M200.75 654.5V657.4 M202.75 657.4V660.3 M206.75 659.3V660.6 M212.75 655.4V656.6 M214.75 655.5V665.8 M216.75 665.8V681.7 M221.75 687.8V704.8 M227.75 679.3V696.9 M233.75 689.7V698.7 M237.75 688.1V690.0 M239.75 690.0V698.4 M242.75 685.1V689.9 M246.75 684.0V688.8 M248.75 688.8V698.4 M252.75 688.5V689.7 M256.75 683.2V688.8 M258.75 688.8V694.8 M263.75 681.6V688.7 M265.75 688.7V696.4 M275.75 672.0V688.0 M277.75 688.0V696.5 M284.75 674.7V682.0 M288.75 661.7V673.6 M300.75 645.7V673.6 M315.75 559.4V579.0 M322.75 619.1V631.3 M340.75 584.0V585.2 M342.75 588.4V601.2 M345.75 603.6V606.2 M349.75 605.2V624.7 M355.75 620.3V624.3 M357.75 624.9V627.8 M359.75 629.0V646.6 M361.75 646.6V651.6 M364.75 646.2V648.4 M366.75 648.4V666.1 M378.75 619.6V659.5 M382.75 656.8V670.6 M385.75 661.5V671.3 M387.75 671.3V678.0 M391.75 662.1V683.3 M395.75 666.5V667.9 M397.75 667.9V676.9 M399.75 676.9V679.1 M403.75 671.2V687.2 M404.75 687.2V697.1 M406.75 697.1V698.4 M408.75 698.4V699.7 M412.75 682.2V696.3 M416.75 686.2V690.1 M420.75 682.7V689.1 M429.75 682.3V683.5 M431.75 683.5V685.9 M435.75 684.5V692.9 M439.75 692.0V693.2 M441.75 692.7V694.2 M444.75 691.9V693.2 M448.75 691.2V697.1 M450.75 697.1V698.4 M458.75 687.3V688.5 M465.75 701.4V710.8 M467.75 710.8V713.8 M469.75 713.8V716.3 M475.75 702.1V708.5 M477.75 708.5V710.5 M479.75 710.5V713.3 M483.75 701.9V709.7 M486.75 707.7V709.0 M490.75 705.7V716.3 M492.75 716.3V717.5 M494.75 717.4V724.7 M496.75 724.7V727.7 M498.75 727.7V728.9 M502.75 724.0V732.1 M506.75 732.3V736.9 M507.75 736.9V741.8 M513.75 737.9V742.3 M517.75 738.5V742.1 M521.75 741.3V742.5 M523.75 742.5V744.3 M525.75 744.3V749.2 M528.75 743.8V748.5 M530.75 748.5V755.8 M532.75 766.3V778.9 M540.75 770.6V772.8 M549.75 740.7V750.5 M557.75 735.9V737.1 M559.75 738.3V747.5 M561.75 747.5V752.4 M563.75 752.4V759.2 M565.75 759.2V760.4 M568.75 751.2V753.3 M576.75 747.5V757.0 M578.75 757.0V758.2 M580.75 758.1V763.6 M582.75 763.6V769.2 M586.75 768.0V778.3 M588.75 778.3V789.1 M589.75 789.1V807.7 M597.75 788.9V790.2 M601.75 779.4V783.3 M603.75 783.3V784.5 M607.75 779.2V781.8 M612.75 775.8V777.7 M620.75 767.5V771.7 M629.75 769.3V774.2 M631.75 774.2V778.3 M633.75 778.3V780.3 M635.75 780.3V781.5 M637.75 780.8V782.5 M641.75 782.4V783.6 M645.75 773.9V776.4 M647.75 776.4V780.9 M650.75 778.6V782.8 M662.75 753.0V759.6 M664.75 759.6V769.5 M666.75 769.5V772.1 M671.75 763.1V765.3 M677.75 755.9V760.8 M679.75 760.8V762.4 M687.75 742.7V750.7 M689.75 750.7V754.0 M690.75 754.0V755.4 M696.75 745.5V746.7 M698.75 746.7V747.9 M704.75 740.7V749.2 M706.75 749.2V750.4 M711.75 744.2V748.6 M717.75 741.7V746.0 M723.75 742.0V746.8 M725.75 746.8V750.5 M727.75 750.5V754.3 M731.75 750.0V755.1 M732.75 755.1V756.5 M736.75 755.2V763.6 M742.75 748.9V760.7 M744.75 760.7V761.9 M748.75 754.2V762.3 M755.75 758.4V769.2 M757.75 769.2V770.4 M759.75 769.8V771.0 M763.75 762.7V765.8 M765.75 765.8V767.0 M767.75 765.8V767.0 M774.75 734.0V738.6 M780.75 711.9V714.0 M782.75 714.0V715.2 M786.75 712.2V719.5 M790.75 715.5V724.7 M792.75 724.7V728.6 M816.75 634.3V658.7 M822.75 634.5V646.6 M828.75 659.3V670.4 M834.75 657.7V661.9 M837.75 663.9V668.9 M839.75 668.9V671.9 M841.75 671.9V679.4 M847.75 674.6V679.1 M849.75 689.2V700.4 M856.75 706.3V713.2 M858.75 713.2V715.2 M868.75 672.1V689.6 M875.75 679.2V688.0 M877.75 688.0V694.5 M879.75 694.5V698.7 M883.75 688.9V693.1 M885.75 693.1V702.2 M887.75 702.2V718.1 M889.75 718.1V720.9 M893.75 713.3V718.1 M900.75 675.6V683.9 M908.75 622.9V645.5 M914.75 634.8V655.4 M916.75 655.4V657.2 M917.75 657.2V658.4 M921.75 657.7V672.2 M923.75 672.2V677.0 M929.75 675.3V686.2 M931.75 686.2V691.1 M933.75 691.1V693.0 M938.75 689.4V690.6 M940.75 690.9V702.7 M946.75 685.1V686.3 M950.75 678.5V692.6 M957.75 675.1V678.4 M959.75 678.4V689.8 M961.75 689.8V694.8 M965.75 689.5V692.7 M967.75 692.7V700.1 M969.75 700.1V703.5 M971.75 703.5V704.7 M973.75 703.7V710.0 M978.75 705.6V721.0 M982.75 711.8V721.6 M988.75 718.1V719.6 M990.75 719.6V730.0 M994.75 741.7V742.9 M996.75 742.3V752.8 M998.75 752.8V754.0 M1001.75 745.8V749.2 M1003.75 749.2V756.8 M1007.75 745.8V749.7 M1009.75 749.7V750.9 M1013.75 739.9V746.8 M1020.75 671.8V679.5 M1024.75 677.4V679.3 M1026.75 679.3V693.5 M1032.75 687.0V692.5 M1034.75 692.5V693.7 M1036.75 692.9V695.2 M1038.75 695.2V696.7 M1039.75 696.7V701.7 M1041.75 701.7V703.2 M1043.75 703.2V714.2 M1049.75 690.8V695.4 M1051.75 695.4V697.8 M1057.75 695.5V697.0 M1062.75 682.9V689.9 M1070.75 670.2V675.2 M1076.75 667.6V679.1 M1081.75 673.6V683.7 M1087.75 667.6V668.8 M1089.75 668.7V670.0 M1091.75 670.0V679.6 M1099.75 678.6V684.4 M1104.75 680.8V686.7 M1110.75 685.4V687.1 M1121.75 655.9V667.3 M1123.75 667.3V669.5 M1129.75 658.8V660.0 M1131.75 663.6V665.1 M1135.75 667.8V673.4 M1137.75 673.4V674.6 M1139.75 673.8V675.9 M1142.75 672.2V676.5 M1144.75 676.5V677.7 M1146.75 677.3V679.6 M1150.75 674.6V676.1 M1154.75 674.9V681.5 M1158.75 681.8V689.8 M1160.75 689.8V691.0 M1162.75 690.2V693.1 M1173.75 683.5V687.4 M1179.75 680.7V684.0 M1188.75 669.3V674.6 M1190.75 674.6V676.8 M1194.75 679.2V681.4 M1200.75 671.6V682.5 M1202.75 682.5V687.7 M1205.75 672.6V689.5 M1207.75 689.5V693.5 M1209.75 693.5V696.9 M1211.75 696.9V698.1 M1221.75 689.2V693.4 M1224.75 690.7V699.5 M1230.75 692.1V694.5 M1232.75 694.5V700.4 M1238.75 693.7V694.9 M1240.75 694.7V697.6 M1242.75 697.6V699.8 M1244.75 699.8V705.0 M1245.75 705.0V706.2 M1247.75 706.0V714.0 M1249.75 714.0V716.2 M1263.75 696.1V703.3 M1268.75 696.1V704.0 M1270.75 704.0V705.2 M1272.75 704.9V712.5 M1278.75 706.7V709.3 M1280.75 709.3V717.1 M1282.75 717.1V719.9 M1285.75 716.9V719.2 M1291.75 715.4V717.7 M1295.75 714.7V719.4 M77.75 606.0V620.6 M138.75 628.3V641.1 M148.75 645.9V669.0 M296.75 645.0V667.8 M310.75 575.3V608.5 M314.75 543.2V571.8 M318.75 569.5V610.4 M321.75 602.5V641.4 M329.75 619.5V637.6 M339.75 579.9V592.7 M343.75 595.5V606.0 M348.75 609.3V624.2 M351.75 624.5V656.0 M368.75 649.9V676.7 M371.75 654.3V687.8 M377.75 633.2V661.4 M379.75 640.0V676.4 M462.75 713.2V723.5 M806.75 656.0V678.6 M813.75 647.2V669.5 M819.75 617.6V646.2 M826.75 637.2V675.2 M835.75 647.2V661.6 M992.75 735.9V753.1 M1053.75 689.9V712.5 M1193.75 683.0V708.4 M1199.75 663.6V681.8" stroke="#f23645" stroke-width="1.7" fill="none"/>
<path d="M217 666V850.6 M530 758V819.3 M589 788V817.8" stroke="#f23645" stroke-width="1.8" fill="none"/>
<path d="M14.75 736.6V738.6 M17.75 737.5V738.7 M19.75 737.2V738.4 M25.75 733.4V739.1 M29.75 728.3V735.3 M34.75 723.9V726.1 M36.75 722.0V723.9 M38.75 719.8V722.0 M40.75 717.7V719.8 M48.75 724.7V725.9 M50.75 721.7V724.7 M54.75 722.8V724.0 M55.75 722.5V723.7 M57.75 719.2V722.5 M59.75 716.4V719.2 M61.75 713.6V716.4 M71.75 662.9V670.6 M73.75 638.6V662.9 M78.75 610.1V611.3 M88.75 629.0V632.7 M94.75 635.6V651.3 M99.75 640.1V650.7 M109.75 654.1V661.3 M111.75 644.9V654.1 M113.75 640.1V644.9 M115.75 639.5V640.7 M120.75 633.0V647.4 M122.75 629.3V633.0 M124.75 628.5V629.7 M128.75 627.9V629.4 M136.75 632.0V642.7 M145.75 646.6V662.6 M151.75 648.6V655.0 M155.75 652.5V656.1 M158.75 650.0V656.8 M160.75 648.5V650.0 M164.75 649.5V650.7 M168.75 652.9V659.9 M174.75 662.0V667.8 M176.75 655.2V662.0 M178.75 652.0V655.2 M183.75 651.6V656.9 M187.75 653.9V660.5 M193.75 655.3V665.0 M197.75 655.4V663.2 M198.75 654.5V655.7 M204.75 659.3V660.5 M208.75 658.5V660.6 M210.75 655.4V658.5 M218.75 669.6V681.7 M223.75 704.4V705.6 M225.75 679.3V704.4 M229.75 691.1V696.9 M231.75 689.7V691.1 M235.75 688.1V698.7 M240.75 685.1V698.4 M244.75 684.0V689.9 M250.75 688.5V698.4 M254.75 683.2V688.6 M260.75 689.7V694.8 M261.75 681.6V689.7 M267.75 687.5V696.4 M269.75 683.6V687.5 M271.75 673.6V683.6 M273.75 672.0V673.6 M279.75 696.1V697.3 M280.75 678.3V696.1 M282.75 674.7V678.3 M286.75 661.7V682.0 M290.75 657.9V673.6 M292.75 631.4V657.9 M298.75 645.7V653.2 M301.75 668.5V669.7 M305.75 616.0V626.1 M311.75 569.4V593.6 M319.75 598.2V602.3 M326.75 640.6V644.6 M330.75 613.9V626.0 M334.75 588.8V605.7 M353.75 617.8V629.6 M362.75 646.2V651.6 M372.75 642.7V650.7 M374.75 630.0V642.7 M383.75 661.5V670.6 M389.75 662.1V678.0 M393.75 666.5V683.3 M401.75 671.2V679.1 M410.75 682.2V699.7 M414.75 686.2V696.3 M418.75 682.7V690.1 M422.75 686.6V689.1 M424.75 683.3V686.6 M425.75 681.5V683.3 M427.75 681.7V682.9 M433.75 684.5V685.9 M437.75 692.0V693.2 M446.75 691.2V693.2 M452.75 690.9V698.4 M454.75 686.2V690.9 M456.75 684.8V686.2 M460.75 691.5V692.7 M464.75 698.1V701.4 M471.75 705.0V716.3 M473.75 702.1V705.0 M481.75 701.9V713.3 M485.75 707.7V709.7 M488.75 705.7V709.0 M500.75 721.0V727.7 M504.75 728.6V732.1 M509.75 740.2V741.8 M511.75 737.9V740.2 M515.75 738.5V742.3 M519.75 741.3V742.5 M526.75 743.8V749.2 M534.75 777.3V778.9 M536.75 770.3V777.3 M538.75 770.3V771.5 M542.75 767.2V772.8 M544.75 751.7V767.2 M547.75 740.7V751.0 M551.75 742.9V750.4 M555.75 734.0V737.0 M567.75 751.2V760.2 M570.75 747.4V753.3 M572.75 747.0V748.2 M574.75 746.4V747.6 M584.75 768.0V769.2 M591.75 802.2V805.7 M593.75 799.7V800.9 M595.75 788.9V796.2 M599.75 779.4V786.9 M605.75 779.2V784.2 M608.75 781.1V782.3 M610.75 775.8V781.1 M614.75 773.3V777.7 M616.75 771.6V773.3 M618.75 767.5V771.6 M622.75 770.6V771.8 M624.75 764.1V770.6 M628.75 767.9V772.0 M639.75 782.4V783.6 M643.75 773.9V783.0 M649.75 778.6V780.9 M652.75 774.5V782.8 M654.75 765.7V774.5 M656.75 760.5V765.7 M658.75 760.0V761.2 M660.75 753.0V760.0 M668.75 772.1V773.3 M670.75 763.1V772.4 M673.75 758.7V765.3 M675.75 755.9V758.7 M681.75 762.2V763.4 M683.75 751.0V761.2 M685.75 742.7V751.0 M692.75 745.9V755.4 M694.75 745.5V746.7 M700.75 745.8V747.9 M702.75 739.5V745.8 M708.75 747.1V749.8 M710.75 744.2V747.1 M713.75 745.6V748.6 M715.75 741.7V745.6 M719.75 745.3V746.5 M721.75 742.0V745.3 M729.75 750.0V754.3 M734.75 755.2V756.5 M738.75 754.4V763.6 M740.75 748.0V754.4 M746.75 754.2V761.7 M750.75 757.3V762.3 M752.75 756.2V757.4 M753.75 757.5V758.7 M761.75 762.7V770.8 M769.75 748.0V763.6 M771.75 745.3V748.0 M772.75 734.0V745.3 M778.75 711.3V721.1 M784.75 712.2V715.1 M788.75 715.5V719.5 M793.75 714.7V728.1 M795.75 713.5V714.7 M797.75 695.6V713.5 M799.75 687.5V695.6 M807.75 681.5V682.7 M809.75 667.7V680.7 M811.75 651.5V667.7 M814.75 634.3V663.8 M820.75 634.5V657.1 M824.75 644.6V646.6 M830.75 658.3V670.4 M832.75 657.7V658.9 M843.75 676.5V679.4 M845.75 674.0V676.5 M853.75 716.1V736.4 M854.75 706.3V716.1 M860.75 710.5V711.7 M864.75 665.1V683.3 M870.75 680.5V689.6 M872.75 678.4V680.5 M874.75 678.1V679.3 M881.75 688.9V698.7 M891.75 713.3V720.9 M895.75 698.6V715.9 M896.75 685.3V698.6 M898.75 675.6V685.3 M904.75 646.4V664.2 M910.75 645.5V646.7 M912.75 634.8V645.7 M919.75 657.7V658.9 M925.75 676.6V677.8 M935.75 685.5V693.0 M942.75 698.8V702.7 M944.75 685.1V698.8 M948.75 678.5V685.4 M952.75 677.9V692.6 M954.75 677.2V678.4 M956.75 675.1V677.2 M963.75 689.5V694.8 M975.75 707.8V710.0 M977.75 704.8V707.8 M980.75 711.8V721.0 M984.75 718.7V721.6 M986.75 718.1V719.3 M999.75 745.8V754.0 M1011.75 739.9V750.8 M1015.75 708.3V732.6 M1017.75 686.6V708.3 M1022.75 677.4V679.5 M1028.75 687.5V693.5 M1030.75 687.0V688.2 M1045.75 704.7V714.2 M1047.75 690.8V704.7 M1059.75 694.1V696.1 M1060.75 682.9V694.1 M1064.75 678.9V689.9 M1066.75 674.6V678.9 M1068.75 670.2V674.6 M1072.75 668.2V675.2 M1074.75 667.6V668.8 M1078.75 674.6V679.1 M1080.75 673.6V674.8 M1083.75 673.5V683.7 M1085.75 667.6V673.5 M1093.75 678.6V679.8 M1095.75 678.1V679.3 M1097.75 676.7V678.1 M1100.75 681.1V684.4 M1102.75 680.8V682.0 M1106.75 685.5V686.7 M1108.75 685.4V686.6 M1112.75 687.1V688.3 M1114.75 684.1V687.4 M1116.75 669.0V684.1 M1120.75 655.9V657.1 M1125.75 658.7V669.5 M1127.75 656.5V658.7 M1133.75 667.5V668.7 M1141.75 672.2V675.9 M1148.75 674.6V679.6 M1152.75 673.3V676.1 M1156.75 681.5V682.7 M1163.75 692.7V693.9 M1165.75 690.2V692.7 M1167.75 687.3V690.2 M1169.75 684.7V687.3 M1171.75 683.5V684.7 M1175.75 685.3V687.4 M1177.75 680.7V685.3 M1182.75 679.7V681.9 M1184.75 670.8V679.7 M1186.75 666.5V670.8 M1213.75 697.4V698.6 M1215.75 692.1V697.4 M1217.75 690.2V692.1 M1219.75 688.9V690.2 M1223.75 690.7V693.4 M1226.75 694.3V699.5 M1228.75 692.1V694.3 M1234.75 696.2V700.4 M1236.75 693.7V696.2 M1251.75 706.2V714.1 M1253.75 700.2V706.2 M1255.75 697.3V700.2 M1257.75 696.4V697.6 M1259.75 696.4V697.6 M1261.75 696.1V697.3 M1264.75 697.4V703.3 M1266.75 696.1V697.4 M1274.75 709.8V712.5 M1276.75 706.7V709.8 M1284.75 716.9V719.9 M1287.75 717.0V719.2 M1289.75 715.4V717.0 M1293.75 714.7V717.7 M1297.75 716.7V719.4 M30.75 708.7V726.3 M42.75 703.9V725.6 M67.75 678.9V710.2 M68.75 670.4V682.3 M75.75 614.7V629.1 M83.75 601.9V633.9 M96.75 636.5V652.4 M133.75 617.6V641.0 M220.75 675.1V708.6 M294.75 624.2V671.7 M303.75 621.5V648.6 M307.75 547.5V600.6 M308.75 568.5V602.8 M312.75 547.1V580.2 M325.75 632.6V660.9 M332.75 594.9V626.3 M337.75 578.9V596.1 M375.75 639.8V680.5 M443.75 678.4V697.2 M547.75 735.9V755.0 M553.75 734.7V745.1 M625.75 757.8V772.4 M776.75 710.0V736.7 M802.75 681.8V693.4 M803.75 650.9V674.3 M817.75 621.2V668.3 M851.75 714.8V738.2 M862.75 677.0V695.8 M866.75 654.6V688.8 M903.75 640.3V685.3 M906.75 616.7V659.2 M928.75 657.8V678.4 M937.75 703.3V722.2 M1005.75 744.5V762.7 M1018.75 669.4V689.6 M1055.75 667.5V685.7 M1117.75 655.8V677.2 M1180.75 667.2V678.3 M1196.75 666.3V695.7 M1204.75 664.6V691.9" stroke="#089981" stroke-width="1.7" fill="none"/>
<path d="M1301.5 100.5V715" stroke="#089981" stroke-width="2" fill="none"/>
<path d="M1303 275.5V363" stroke="#f23645" stroke-width="2" fill="none"/>
<path d="M323.5 681.4C325.1 680.9 328.9 680.0 333.0 678.6C337.1 677.2 342.5 674.3 348.2 672.9C353.9 671.5 360.3 670.6 367.3 670.0C374.3 669.4 382.5 669.0 390.1 669.0C397.7 669.0 404.7 669.4 413.0 670.0C421.3 670.6 430.8 671.8 439.7 672.9C448.6 674.0 457.4 675.3 466.3 676.7C475.2 678.1 485.4 679.7 493.0 681.5C500.6 683.3 505.6 685.6 512.0 687.6C518.4 689.6 524.8 691.2 531.1 693.3C537.5 695.4 543.8 698.1 550.1 700.0C556.5 701.9 562.9 703.0 569.2 704.8C575.6 706.5 581.9 708.5 588.2 710.5C594.6 712.5 600.9 715.2 607.3 717.1C613.6 719.0 618.7 720.0 626.3 721.9C633.9 723.8 645.4 727.0 653.0 728.6C660.6 730.2 665.6 730.5 672.0 731.4C678.4 732.3 684.8 733.7 691.1 734.3C697.5 734.9 703.8 734.9 710.1 735.2C716.5 735.5 722.9 735.7 729.2 736.2C735.6 736.7 741.9 737.3 748.2 738.1C754.6 738.9 760.9 740.7 767.3 741.0C773.6 741.3 778.7 741.1 786.3 740.0C793.9 738.9 805.4 736.8 813.0 734.3C820.6 731.8 825.6 727.2 832.0 724.8C838.4 722.4 844.8 721.1 851.1 720.0C857.5 718.9 863.8 718.6 870.1 718.1C876.5 717.6 883.5 717.6 889.2 717.1C894.9 716.6 899.3 716.2 904.4 715.2C909.5 714.2 914.6 712.7 919.7 711.4C924.8 710.1 929.2 708.4 934.9 707.6C940.6 706.8 947.6 707.2 954.0 706.7C960.4 706.2 966.7 705.0 973.0 704.8C979.3 704.6 985.6 705.2 992.0 705.7C998.4 706.2 1004.8 707.4 1011.1 707.6C1017.5 707.8 1023.7 707.0 1030.1 706.7C1036.4 706.4 1042.8 706.3 1049.2 705.7C1055.6 705.1 1061.9 703.9 1068.2 702.9C1074.5 701.9 1081.0 700.6 1087.3 700.0C1093.6 699.4 1098.7 699.8 1106.3 699.0C1113.9 698.2 1125.4 696.2 1133.0 695.2C1140.6 694.2 1145.7 693.8 1152.0 693.3C1158.3 692.8 1164.8 692.7 1171.1 692.4C1177.4 692.1 1183.8 691.4 1190.1 691.4C1196.4 691.4 1202.8 691.9 1209.2 692.4C1215.6 692.9 1221.9 693.8 1228.2 694.3C1234.5 694.8 1241.0 694.7 1247.3 695.2C1253.6 695.7 1259.9 696.9 1266.3 697.1C1272.7 697.3 1280.0 696.4 1285.4 696.2C1290.8 696.1 1296.5 696.2 1298.7 696.2L1302.5 688.6" fill="none" stroke="#1212cc" stroke-width="1.6" stroke-linejoin="round" stroke-linecap="round"/>
<path d="M132.0 701.4C134.4 700.0 139.5 695.8 146.3 692.9C153.1 690.0 165.4 686.5 173.0 684.3C180.6 682.1 185.0 680.8 192.0 679.5C199.0 678.2 207.6 676.5 214.9 676.7C222.2 676.9 228.3 679.5 235.9 680.5C243.5 681.5 252.7 682.1 260.6 682.4C268.5 682.7 277.5 682.7 283.5 682.4C289.5 682.1 292.4 682.7 296.8 680.5C301.2 678.3 306.0 672.0 310.1 669.0C314.2 666.0 317.8 664.3 321.6 662.4C325.4 660.5 329.8 659.4 333.0 657.6C336.2 655.9 338.1 653.3 340.6 651.9C343.1 650.5 344.4 649.5 348.2 649.0C352.0 648.5 357.1 648.8 363.5 649.0C369.9 649.2 379.3 648.9 386.3 650.0C393.3 651.1 399.0 653.8 405.4 655.7C411.8 657.6 418.0 659.5 424.4 661.4C430.8 663.3 436.5 665.2 443.5 667.1C450.5 669.0 458.1 670.1 466.3 672.9C474.6 675.7 485.4 680.4 493.0 683.8C500.6 687.2 505.6 689.8 512.0 693.3C518.4 696.8 524.8 701.0 531.1 704.8C537.5 708.6 543.8 713.4 550.1 716.2C556.5 719.1 562.9 719.7 569.2 721.9C575.6 724.1 581.9 726.6 588.2 729.5C594.6 732.4 600.9 736.5 607.3 739.0C613.6 741.5 618.7 742.6 626.3 744.8C633.9 747.0 645.4 750.8 653.0 752.4C660.6 754.0 665.6 754.1 672.0 754.3C678.4 754.4 684.1 753.8 691.1 753.3C698.1 752.8 707.0 751.7 714.0 751.4C721.0 751.1 726.7 751.1 733.0 751.4C739.3 751.7 746.3 752.8 752.0 753.3C757.7 753.8 762.2 754.9 767.3 754.3C772.4 753.7 777.4 751.2 782.5 749.5C787.6 747.8 792.7 745.9 797.8 743.8C802.9 741.7 808.6 740.3 813.0 737.1C817.4 733.9 820.6 728.1 824.4 724.8C828.2 721.5 831.4 719.2 835.9 717.1C840.4 715.0 845.4 713.4 851.1 712.4C856.8 711.4 863.8 712.2 870.1 711.4C876.5 710.6 883.5 708.9 889.2 707.6C894.9 706.3 899.3 705.4 904.4 703.8C909.5 702.2 914.6 699.9 919.7 698.1C924.8 696.4 929.2 693.9 934.9 693.3C940.6 692.7 947.6 694.3 954.0 694.3C960.4 694.3 967.3 692.7 973.0 693.3C978.7 693.9 981.9 696.0 988.2 698.1C994.6 700.2 1004.1 705.1 1011.1 705.7C1018.1 706.3 1023.7 702.7 1030.1 701.9C1036.4 701.1 1042.8 701.8 1049.2 701.0C1055.6 700.2 1061.9 698.4 1068.2 697.1C1074.5 695.8 1081.0 694.2 1087.3 693.3C1093.6 692.3 1101.2 691.9 1106.3 691.4C1111.4 690.9 1113.3 691.1 1117.8 690.5C1122.2 689.9 1127.3 688.6 1133.0 687.6C1138.7 686.6 1145.7 685.4 1152.0 684.8C1158.3 684.2 1164.8 684.0 1171.1 683.8C1177.4 683.6 1183.8 683.5 1190.1 683.8C1196.4 684.1 1202.8 684.9 1209.2 685.7C1215.6 686.5 1221.9 687.8 1228.2 688.6C1234.5 689.4 1241.0 689.9 1247.3 690.5C1253.6 691.1 1259.9 691.6 1266.3 692.4C1272.7 693.2 1280.0 694.4 1285.4 695.2C1290.8 696.0 1296.5 696.8 1298.7 697.1L1302.5 683.0" fill="none" stroke="#17b8ae" stroke-width="1.6" stroke-linejoin="round" stroke-linecap="round"/>
<path d="M36.8 736.7C41.2 735.6 57.3 733.3 63.5 730.0C69.7 726.7 69.7 723.1 74.0 716.7C78.3 710.4 84.1 698.2 89.2 691.9C94.3 685.5 99.3 682.4 104.4 678.6C109.5 674.8 114.6 671.9 119.7 669.0C124.8 666.1 130.5 663.4 134.9 661.4C139.3 659.4 140.0 657.7 146.3 656.7C152.7 655.8 165.4 655.6 173.0 655.7C180.6 655.9 185.7 656.7 192.0 657.6C198.3 658.5 205.9 660.0 211.0 661.4C216.1 662.8 218.0 664.0 222.5 666.2C227.0 668.4 232.7 672.4 237.8 674.8C242.9 677.2 248.6 679.4 253.0 680.5C257.4 681.6 259.9 681.1 264.4 681.4C268.8 681.7 275.2 682.5 279.7 682.4C284.1 682.2 287.3 682.2 291.1 680.5C294.9 678.8 298.7 676.7 302.5 671.9C306.3 667.1 310.5 656.5 314.0 651.9C317.5 647.3 320.3 646.2 323.5 644.3C326.7 642.4 330.1 642.4 333.0 640.5C335.9 638.6 338.1 634.5 340.6 632.9C343.1 631.3 344.4 630.7 348.2 631.0C352.0 631.3 358.7 633.2 363.5 634.8C368.3 636.4 372.4 638.6 376.8 640.5C381.2 642.4 385.3 644.0 390.1 646.2C394.9 648.4 400.6 650.9 405.4 653.8C410.2 656.6 414.3 660.4 418.7 663.3C423.1 666.2 427.2 668.3 432.0 671.0C436.8 673.7 442.2 677.6 447.3 679.5C452.4 681.4 457.4 680.6 462.5 682.4C467.6 684.1 472.7 687.5 477.8 690.0C482.9 692.5 488.6 694.3 493.0 697.1C497.4 699.9 500.6 703.8 504.4 706.7C508.2 709.6 511.4 711.4 515.9 714.3C520.4 717.1 526.0 720.0 531.1 723.8C536.2 727.6 541.2 734.6 546.3 737.1C551.4 739.6 556.5 738.0 561.6 739.0C566.7 740.0 571.1 740.7 576.8 742.9C582.5 745.1 590.2 749.4 595.9 752.4C601.6 755.4 606.0 759.1 611.1 761.0C616.2 762.9 621.2 763.0 626.3 763.8C631.4 764.6 637.1 764.9 641.6 765.7C646.1 766.5 647.9 768.8 653.0 768.6C658.1 768.5 665.6 766.2 672.0 764.8C678.4 763.4 684.8 761.6 691.1 760.0C697.5 758.4 704.4 756.5 710.1 755.2C715.8 753.9 720.3 752.7 725.4 752.4C730.5 752.1 735.5 752.7 740.6 753.3C745.7 753.9 751.5 755.4 755.9 756.2C760.3 757.0 763.5 758.7 767.3 758.1C771.1 757.5 774.2 754.5 778.7 752.4C783.2 750.3 789.5 748.7 794.0 745.7C798.5 742.7 802.2 737.8 805.4 734.3C808.6 730.8 810.1 729.6 813.0 724.8C815.9 720.0 819.3 710.5 822.5 705.7C825.7 700.9 828.8 698.9 832.0 696.2C835.2 693.5 838.4 690.1 841.6 689.5C844.8 688.9 847.9 691.3 851.1 692.4C854.3 693.5 857.4 695.9 860.6 696.2C863.8 696.5 866.0 694.6 870.1 694.3C874.2 694.0 881.0 694.0 885.4 694.3C889.8 694.6 893.0 697.2 896.8 696.2C900.6 695.2 904.7 690.8 908.2 688.6C911.7 686.4 914.0 684.5 917.8 682.9C921.6 681.3 927.0 679.2 931.1 679.0C935.2 678.8 938.7 680.6 942.5 681.9C946.3 683.2 948.9 685.8 954.0 686.7C959.1 687.7 967.9 686.7 973.0 687.6C978.1 688.5 980.6 690.3 984.4 692.4C988.2 694.5 992.1 697.1 995.9 700.0C999.7 702.9 1004.1 707.6 1007.3 709.5C1010.5 711.4 1011.7 712.0 1014.9 711.4C1018.1 710.8 1022.5 707.3 1026.3 705.7C1030.1 704.1 1033.3 703.0 1037.8 701.9C1042.2 700.8 1047.9 700.4 1053.0 699.0C1058.1 697.6 1063.1 694.9 1068.2 693.3C1073.3 691.7 1078.4 690.5 1083.5 689.5C1088.6 688.5 1093.6 688.1 1098.7 687.6C1103.8 687.1 1109.5 687.8 1114.0 686.7C1118.5 685.6 1122.2 682.3 1125.4 681.0C1128.6 679.7 1128.6 679.3 1133.0 679.0C1137.4 678.7 1145.7 678.7 1152.0 679.0C1158.3 679.3 1164.8 680.7 1171.1 681.0C1177.4 681.3 1183.8 680.5 1190.1 681.0C1196.4 681.5 1202.8 682.5 1209.2 683.8C1215.6 685.1 1221.9 687.2 1228.2 688.6C1234.5 690.0 1241.0 691.1 1247.3 692.4C1253.6 693.7 1259.9 694.8 1266.3 696.2C1272.7 697.6 1280.0 699.7 1285.4 701.0C1290.8 702.3 1296.5 703.3 1298.7 703.8L1302.5 675.5" fill="none" stroke="#c8681c" stroke-width="1.6" stroke-linejoin="round" stroke-linecap="round"/>
<path d="M13.0 736.7C17.1 735.9 29.4 734.1 37.8 731.9C46.2 729.7 58.1 727.1 63.5 723.3C68.9 719.5 67.4 716.8 70.1 709.0C72.8 701.2 77.2 684.3 79.7 676.7C82.2 669.1 82.6 666.9 85.4 663.3C88.2 659.6 93.0 657.0 96.8 654.8C100.6 652.6 103.8 651.6 108.2 650.0C112.7 648.4 117.2 646.5 123.5 645.2C129.8 643.9 140.6 641.6 146.3 642.4C152.0 643.2 153.4 647.8 157.8 650.0C162.2 652.2 167.3 653.8 173.0 655.7C178.7 657.6 185.7 659.6 192.0 661.4C198.3 663.1 204.7 663.7 211.0 666.2C217.3 668.8 224.4 672.9 230.1 676.7C235.8 680.5 240.6 686.6 245.4 689.0C250.2 691.4 254.3 691.8 258.7 691.0C263.1 690.2 267.9 685.7 272.0 684.3C276.1 682.9 279.7 684.0 283.5 682.4C287.3 680.8 291.1 679.9 294.9 674.8C298.7 669.7 302.8 660.5 306.3 651.9C309.8 643.3 313.0 629.3 315.9 623.3C318.8 617.3 320.6 616.3 323.5 615.7C326.4 615.1 330.5 620.1 333.0 619.5C335.5 618.9 336.2 613.2 338.7 611.9C341.2 610.6 345.3 610.0 348.2 611.9C351.1 613.8 352.1 618.8 355.9 623.3C359.7 627.8 366.0 634.1 371.1 638.6C376.2 643.1 381.5 646.2 386.3 650.0C391.1 653.8 395.2 657.6 399.7 661.4C404.1 665.2 408.2 669.4 413.0 672.9C417.8 676.4 423.1 679.5 428.2 682.4C433.3 685.2 438.4 687.8 443.5 690.0C448.6 692.2 453.0 693.6 458.7 695.7C464.4 697.8 472.1 699.8 477.8 702.4C483.5 705.0 488.9 708.8 493.0 711.4C497.1 714.0 498.7 714.8 502.5 718.1C506.3 721.4 511.8 728.2 515.9 731.4C520.0 734.6 523.5 733.3 527.3 737.1C531.1 740.9 535.5 750.6 538.7 754.3C541.9 757.9 543.8 759.2 546.3 759.0C548.8 758.8 551.1 754.9 554.0 753.3C556.9 751.7 560.0 749.6 563.5 749.5C567.0 749.4 570.8 750.3 574.9 752.4C579.0 754.5 584.1 758.7 588.2 761.9C592.3 765.1 595.9 769.3 599.7 771.4C603.5 773.5 607.3 774.3 611.1 774.3C614.9 774.3 619.3 772.2 622.5 771.4C625.7 770.6 626.9 769.3 630.1 769.5C633.3 769.7 637.8 771.4 641.6 772.4C645.4 773.4 649.2 775.8 653.0 775.2C656.8 774.6 660.6 770.7 664.4 768.6C668.2 766.5 671.4 765.1 675.9 762.9C680.4 760.7 686.0 757.6 691.1 755.2C696.2 752.8 701.5 750.3 706.3 748.6C711.1 746.9 715.9 745.0 719.7 744.8C723.5 744.6 725.4 746.3 729.2 747.6C733.0 748.9 738.0 750.6 742.5 752.4C747.0 754.1 751.8 757.0 755.9 758.1C760.0 759.2 764.1 760.4 767.3 759.0C770.5 757.6 771.7 752.2 774.9 749.5C778.1 746.8 782.5 745.8 786.3 742.9C790.1 740.0 794.6 737.3 797.8 732.4C801.0 727.5 802.9 719.3 805.4 713.3C807.9 707.3 810.5 702.2 813.0 696.2C815.5 690.2 818.1 682.2 820.6 677.1C823.1 672.0 825.7 668.2 828.2 665.7C830.8 663.2 833.0 662.2 835.9 661.9C838.8 661.6 842.5 661.6 845.4 663.8C848.2 666.0 850.5 670.8 853.0 675.2C855.5 679.7 857.8 687.6 860.6 690.5C863.5 693.4 866.6 691.9 870.1 692.4C873.6 692.9 877.5 692.5 881.6 693.3C885.7 694.1 891.4 697.2 894.9 697.1C898.4 697.0 900.0 695.4 902.5 692.4C905.0 689.4 907.2 682.6 910.1 679.0C913.0 675.4 916.8 672.4 919.7 670.5C922.6 668.6 924.8 667.5 927.3 667.6C929.8 667.8 932.4 668.9 934.9 671.4C937.4 673.9 940.0 679.7 942.5 682.9C945.0 686.1 946.9 689.4 950.1 690.5C953.3 691.6 957.8 689.2 961.6 689.5C965.4 689.8 969.5 691.0 973.0 692.4C976.5 693.8 979.3 695.2 982.5 698.1C985.7 701.0 988.8 705.7 992.0 709.5C995.2 713.3 998.7 717.8 1001.6 721.0C1004.5 724.2 1007.0 728.0 1009.2 728.6C1011.4 729.2 1012.7 728.0 1014.9 724.8C1017.1 721.6 1020.0 713.6 1022.5 709.5C1025.0 705.4 1027.2 701.9 1030.1 700.0C1033.0 698.1 1036.5 697.8 1039.7 698.1C1042.9 698.4 1046.0 702.2 1049.2 701.9C1052.4 701.6 1055.5 698.7 1058.7 696.2C1061.9 693.7 1064.7 688.8 1068.2 686.7C1071.7 684.6 1075.9 685.1 1079.7 683.8C1083.5 682.5 1087.3 679.1 1091.1 679.0C1094.9 678.9 1098.7 681.9 1102.5 682.9C1106.3 683.9 1110.5 686.1 1114.0 684.8C1117.5 683.5 1120.3 677.4 1123.5 675.2C1126.7 673.0 1128.2 671.4 1133.0 671.4C1137.8 671.4 1146.3 673.6 1152.0 675.2C1157.7 676.8 1162.2 680.4 1167.3 681.0C1172.4 681.6 1178.0 678.7 1182.5 679.0C1187.0 679.3 1188.9 681.6 1194.0 682.9C1199.1 684.2 1206.7 684.8 1213.0 686.7C1219.3 688.6 1226.3 692.1 1232.0 694.3C1237.7 696.5 1242.2 698.7 1247.3 700.0C1252.4 701.3 1257.4 700.9 1262.5 701.9C1267.6 702.9 1272.1 704.4 1277.8 705.7C1283.5 707.0 1293.0 710.8 1296.8 709.5C1300.6 708.2 1300.0 700.0 1300.6 698.1L1302.5 644.5" fill="none" stroke="#b8161e" stroke-width="1.6" stroke-linejoin="round" stroke-linecap="round"/>
<path d="M13.0 736.5C15.5 736.2 23.1 735.7 28.2 735.0C33.3 734.3 37.6 734.4 43.5 732.5C49.4 730.6 59.1 726.5 63.5 723.5C67.9 720.5 67.7 719.8 70.1 714.8C72.5 709.8 75.2 700.8 77.8 693.8C80.3 686.8 82.6 679.6 85.4 672.9C88.2 666.2 92.1 658.6 94.9 653.8C97.8 649.0 100.3 647.0 102.5 644.3C104.7 641.6 106.0 637.9 108.2 637.6C110.4 637.3 112.7 641.3 115.9 642.4C119.1 643.5 123.5 644.5 127.3 644.3C131.1 644.1 134.9 641.6 138.7 641.4C142.5 641.2 146.3 642.3 150.1 643.3C153.9 644.2 157.8 645.2 161.6 647.1C165.4 649.0 167.9 652.7 173.0 654.8C178.1 656.9 185.7 658.1 192.0 659.5C198.3 660.9 206.2 661.4 211.0 663.3C215.8 665.2 217.4 669.1 220.6 671.0C223.8 672.9 226.9 672.9 230.1 674.8C233.3 676.7 236.5 679.9 239.7 682.4C242.9 684.9 245.7 688.2 249.2 690.0C252.7 691.8 256.8 692.4 260.6 692.9C264.4 693.4 268.2 693.7 272.0 692.9C275.8 692.1 279.7 690.2 283.5 688.1C287.3 686.0 291.1 684.6 294.9 680.5C298.7 676.4 302.8 670.6 306.3 663.3C309.8 656.0 312.7 644.6 315.9 636.7C319.1 628.8 322.5 619.8 325.4 615.7C328.2 611.6 330.8 614.3 333.0 611.9C335.2 609.5 336.5 603.0 338.7 601.4C340.9 599.8 344.1 600.0 346.3 602.4C348.5 604.8 349.8 612.2 352.0 615.7C354.2 619.2 356.8 621.4 359.7 623.3C362.6 625.2 366.3 624.2 369.2 627.1C372.1 630.0 373.9 636.7 376.8 640.5C379.7 644.3 383.1 647.5 386.3 650.0C389.5 652.5 392.7 652.9 395.9 655.7C399.1 658.6 402.2 663.9 405.4 667.1C408.6 670.3 411.7 672.6 414.9 674.8C418.1 677.0 420.9 678.6 424.4 680.5C427.9 682.4 432.1 684.5 435.9 686.2C439.7 688.0 442.9 689.1 447.3 691.0C451.7 692.9 457.4 695.6 462.5 697.6C467.6 699.6 472.7 701.1 477.8 703.3C482.9 705.4 488.9 707.7 493.0 710.5C497.1 713.3 498.7 716.2 502.5 720.0C506.3 723.8 512.1 730.4 515.9 733.3C519.7 736.1 522.2 734.5 525.4 737.1C528.6 739.7 531.7 745.1 534.9 748.6C538.1 752.1 541.2 756.8 544.4 758.1C547.6 759.4 550.5 756.4 554.0 756.2C557.5 756.0 561.6 758.2 565.4 757.1C569.2 756.0 573.3 750.3 576.8 749.5C580.3 748.7 583.1 750.0 586.3 752.4C589.5 754.8 592.4 760.3 595.9 763.8C599.4 767.3 603.5 770.6 607.3 773.3C611.1 776.0 614.9 780.0 618.7 780.0C622.5 780.0 626.3 774.6 630.1 773.3C633.9 772.0 637.8 772.4 641.6 772.4C645.4 772.4 649.2 773.3 653.0 773.3C656.8 773.3 660.6 773.3 664.4 772.4C668.2 771.5 671.4 769.8 675.9 767.6C680.4 765.4 686.7 761.5 691.1 759.0C695.5 756.5 698.0 754.6 702.5 752.4C707.0 750.2 714.0 747.1 717.8 745.7C721.6 744.3 722.2 743.8 725.4 743.8C728.6 743.8 732.4 744.4 736.8 745.7C741.2 747.0 746.9 748.9 752.0 751.4C757.1 753.9 763.5 759.7 767.3 761.0C771.1 762.3 771.7 760.6 774.9 759.0C778.1 757.4 782.5 755.5 786.3 751.4C790.1 747.3 794.6 740.0 797.8 734.3C801.0 728.6 802.9 722.8 805.4 717.1C807.9 711.4 810.5 705.1 813.0 700.0C815.5 694.9 818.1 692.4 820.6 686.7C823.1 681.0 825.7 671.0 828.2 665.7C830.8 660.5 833.0 657.0 835.9 655.2C838.8 653.5 842.5 653.5 845.4 655.2C848.2 657.0 850.5 661.4 853.0 665.7C855.5 670.0 858.1 676.5 860.6 681.0C863.1 685.5 865.3 689.7 868.2 692.4C871.1 695.1 874.9 696.0 877.8 697.1C880.7 698.2 882.2 699.1 885.4 699.0C888.6 698.9 893.6 697.6 896.8 696.2C900.0 694.8 901.5 692.9 904.4 690.5C907.3 688.1 910.8 684.8 914.0 681.9C917.2 679.0 920.3 676.1 923.5 673.3C926.7 670.4 930.5 666.1 933.0 664.8C935.5 663.5 936.5 664.0 938.7 665.7C940.9 667.4 943.8 671.9 946.3 675.2C948.8 678.5 950.8 683.0 954.0 685.7C957.2 688.4 962.2 690.0 965.4 691.4C968.6 692.8 970.1 693.5 973.0 694.3C975.9 695.1 979.3 694.9 982.5 696.2C985.7 697.5 988.8 698.4 992.0 701.9C995.2 705.4 998.4 712.6 1001.6 717.1C1004.8 721.6 1008.6 726.9 1011.1 728.6C1013.6 730.4 1014.3 730.2 1016.8 727.6C1019.3 725.0 1022.8 717.6 1026.3 713.3C1029.8 709.0 1034.6 705.1 1037.8 701.9C1041.0 698.7 1042.9 696.2 1045.4 694.3C1047.9 692.4 1049.8 691.3 1053.0 690.5C1056.2 689.7 1060.6 690.5 1064.4 689.5C1068.2 688.5 1072.1 686.2 1075.9 684.8C1079.7 683.4 1084.1 682.0 1087.3 681.0C1090.5 680.0 1091.7 678.9 1094.9 679.0C1098.1 679.1 1102.8 680.9 1106.3 681.9C1109.8 682.9 1113.0 685.6 1115.9 684.8C1118.8 684.0 1120.7 678.9 1123.5 677.1C1126.3 675.3 1128.2 674.9 1133.0 674.0C1137.8 673.1 1147.5 671.3 1152.0 671.5C1156.5 671.7 1156.5 673.5 1159.7 675.2C1162.9 676.9 1167.3 681.1 1171.1 681.9C1174.9 682.7 1178.7 679.8 1182.5 680.0C1186.3 680.2 1189.5 682.3 1194.0 682.9C1198.5 683.5 1204.8 683.2 1209.2 683.8C1213.6 684.4 1216.1 685.6 1220.6 686.7C1225.0 687.8 1230.8 689.5 1235.9 690.5C1241.0 691.5 1246.0 691.9 1251.1 692.4C1256.2 692.9 1261.2 693.0 1266.3 693.3C1271.4 693.6 1276.5 693.8 1281.6 694.3C1286.7 694.8 1293.6 696.5 1296.8 696.2C1300.0 695.9 1300.0 693.0 1300.6 692.4L1302.5 673.5" fill="none" stroke="#2e62f5" stroke-width="1.7" stroke-linejoin="round" stroke-linecap="round"/>
<path d="M13.0 732.9C14.9 732.9 21.9 734.0 24.4 732.9C26.9 731.8 26.4 727.8 28.2 726.0C29.9 724.2 32.2 724.3 34.9 722.4C37.6 720.5 39.8 716.5 44.4 714.8C49.0 713.0 59.0 714.1 62.5 711.9C66.0 709.7 64.5 707.3 65.4 701.4C66.4 695.5 67.1 685.0 68.2 676.7C69.3 668.5 70.7 662.7 72.0 651.9C73.3 641.1 74.8 620.0 75.9 611.9C77.0 603.8 77.3 607.1 78.7 603.3C80.1 599.5 82.7 592.0 84.4 589.0C86.2 586.0 87.5 586.1 89.2 585.6C91.0 585.1 93.0 584.4 94.9 586.2C96.8 588.1 99.0 593.2 100.6 596.7C102.2 600.2 102.5 604.2 104.4 607.1C106.3 610.0 109.9 611.1 112.0 613.8C114.1 616.5 114.9 621.1 116.8 623.3C118.7 625.5 120.5 626.1 123.5 627.1C126.5 628.1 131.1 629.5 134.9 629.0C138.7 628.5 142.5 625.2 146.3 624.3C150.1 623.3 154.3 623.1 157.8 623.3C161.3 623.4 164.8 623.6 167.3 625.2C169.8 626.8 171.1 630.4 173.0 632.9C174.9 635.4 177.1 637.3 178.7 640.5C180.3 643.7 179.9 649.8 182.5 651.9C185.1 654.0 190.8 652.9 194.0 652.9C197.2 652.9 198.1 651.6 201.6 651.9C205.1 652.2 212.1 656.2 214.9 654.8C217.8 653.4 217.4 645.4 218.7 643.3C220.0 641.2 220.6 641.9 222.5 642.4C224.4 642.9 227.2 645.1 230.1 646.2C233.0 647.3 236.5 646.5 239.7 649.0C242.9 651.5 246.7 658.5 249.2 661.4C251.7 664.3 253.0 664.6 254.9 666.2C256.8 667.8 258.4 670.0 260.6 671.0C262.8 672.0 265.0 671.6 268.2 671.9C271.4 672.2 276.8 672.7 279.7 672.9C282.6 673.1 283.8 673.9 285.4 672.9C287.0 671.9 287.6 671.2 289.2 667.1C290.8 663.0 292.7 655.1 294.9 648.1C297.1 641.1 300.6 635.4 302.5 625.2C304.4 615.0 304.7 597.2 306.3 587.1C307.9 577.0 310.4 571.6 312.0 564.3C313.6 557.0 314.3 547.1 315.9 543.3C317.5 539.5 319.7 540.9 321.6 541.4C323.5 541.9 325.4 544.8 327.3 546.2C329.2 547.6 330.5 549.0 333.0 550.0C335.5 551.0 339.8 550.5 342.5 551.9C345.2 553.3 347.6 555.6 349.2 558.6C350.8 561.6 350.2 566.4 352.0 570.0C353.8 573.6 357.5 578.6 359.7 580.5C361.9 582.4 363.5 581.7 365.4 581.4C367.3 581.1 369.7 578.0 371.1 578.6C372.5 579.2 372.4 580.6 374.0 585.2C375.6 589.8 378.4 598.9 380.6 606.2C382.8 613.5 384.8 624.9 387.3 629.0C389.9 633.1 392.9 629.4 395.9 631.0C398.9 632.6 402.7 637.5 405.4 638.6C408.1 639.7 410.1 636.3 412.0 637.6C413.9 638.9 415.1 643.5 416.8 646.2C418.6 648.9 420.3 650.0 422.5 653.8C424.7 657.6 427.6 664.9 430.1 669.0C432.7 673.1 434.9 676.4 437.8 678.6C440.7 680.8 444.8 681.5 447.3 682.4C449.8 683.3 451.1 684.8 453.0 684.3C454.9 683.8 455.8 680.3 458.7 679.5C461.6 678.7 466.9 679.0 470.1 679.5C473.3 680.0 475.6 680.6 477.8 682.4C480.0 684.1 481.0 688.5 483.5 690.0C486.0 691.5 490.5 691.2 493.0 691.4C495.5 691.6 496.5 691.7 498.7 691.4C500.9 691.1 504.1 688.5 506.3 689.5C508.5 690.5 509.4 693.3 512.0 697.1C514.5 700.9 518.4 708.3 521.6 712.4C524.8 716.5 528.2 719.8 531.1 721.9C534.0 724.0 535.5 724.2 538.7 724.8C541.9 725.4 546.6 726.2 550.1 725.7C553.6 725.2 556.5 722.2 559.7 721.9C562.9 721.6 565.7 722.2 569.2 723.8C572.7 725.4 577.4 731.7 580.6 731.4C583.8 731.1 586.0 723.3 588.2 721.9C590.4 720.5 591.8 720.4 594.0 722.9C596.2 725.4 599.4 733.8 601.6 737.1C603.8 740.4 605.1 739.4 607.3 742.9C609.5 746.4 613.0 754.9 614.9 758.1C616.8 761.3 616.8 762.2 618.7 761.9C620.6 761.6 624.1 756.5 626.3 756.2C628.5 755.9 627.5 759.4 632.0 760.0C636.5 760.6 648.2 760.8 653.0 760.0C657.8 759.2 657.4 757.0 660.6 755.2C663.8 753.5 668.2 751.2 672.0 749.5C675.8 747.8 679.7 747.0 683.5 744.8C687.3 742.6 691.4 738.0 694.9 736.2C698.4 734.5 700.6 734.9 704.4 734.3C708.2 733.7 714.3 732.6 717.8 732.4C721.3 732.2 722.2 732.7 725.4 733.3C728.6 733.9 733.3 735.7 736.8 736.2C740.3 736.7 743.1 735.4 746.3 736.2C749.5 737.0 752.4 739.1 755.9 741.0C759.4 742.9 764.8 746.3 767.3 747.6C769.8 748.9 769.8 751.1 771.1 748.6C772.4 746.1 773.6 737.3 774.9 732.4C776.2 727.5 776.8 723.1 778.7 719.0C780.6 714.9 783.4 710.8 786.3 707.6C789.2 704.4 793.7 703.5 795.9 700.0C798.1 696.5 798.4 692.1 799.7 686.7C801.0 681.3 801.9 673.3 803.5 667.6C805.1 661.9 807.6 656.5 809.2 652.4C810.8 648.3 811.4 648.9 813.0 642.9C814.6 636.9 817.1 622.2 818.7 616.2C820.3 610.2 821.1 609.4 822.5 606.7C823.9 604.0 825.9 600.8 827.3 600.0C828.7 599.2 829.7 599.4 831.1 601.9C832.5 604.4 834.1 612.4 835.9 615.2C837.6 618.1 839.7 618.7 841.6 619.0C843.5 619.3 845.7 619.3 847.3 617.1C848.9 614.9 849.8 608.4 851.1 605.7C852.4 603.0 853.6 599.9 854.9 601.0C856.2 602.1 857.1 608.0 858.7 612.4C860.3 616.8 862.8 622.8 864.4 627.6C866.0 632.4 866.6 636.9 868.2 641.0C869.8 645.1 871.8 648.0 874.0 652.4C876.2 656.8 879.1 664.4 881.6 667.6C884.1 670.8 886.7 670.3 889.2 671.4C891.7 672.5 894.6 673.7 896.8 674.3C899.0 674.9 900.9 681.4 902.5 675.2C904.1 669.0 904.7 644.7 906.3 637.1C907.9 629.5 909.8 632.0 912.0 629.5C914.2 627.0 917.2 623.3 919.7 621.9C922.2 620.5 924.4 620.2 927.3 621.0C930.1 621.8 934.3 626.6 936.8 626.7C939.3 626.9 940.6 621.8 942.5 621.9C944.4 622.0 946.3 624.4 948.2 627.6C950.1 630.8 951.8 636.9 954.0 641.0C956.2 645.1 959.4 648.6 961.6 652.4C963.8 656.2 965.4 660.8 967.3 663.8C969.2 666.8 970.5 669.7 973.0 670.5C975.5 671.3 979.3 669.1 982.5 668.6C985.7 668.1 989.5 666.5 992.0 667.6C994.5 668.7 996.2 672.7 997.8 675.2C999.4 677.8 1000.0 680.7 1001.6 682.9C1003.2 685.1 1005.4 685.4 1007.3 688.6C1009.2 691.8 1011.1 704.5 1013.0 701.9C1014.9 699.3 1016.8 680.0 1018.7 673.3C1020.6 666.6 1022.5 665.2 1024.4 661.9C1026.3 658.6 1028.2 655.5 1030.1 653.3C1032.0 651.1 1034.0 648.8 1035.9 648.6C1037.8 648.5 1039.7 649.7 1041.6 652.4C1043.5 655.1 1045.4 662.3 1047.3 664.8C1049.2 667.3 1050.8 667.8 1053.0 667.6C1055.2 667.4 1058.4 665.1 1060.6 663.8C1062.8 662.5 1064.1 661.1 1066.3 660.0C1068.5 658.9 1071.1 657.4 1074.0 657.1C1076.9 656.8 1081.0 657.0 1083.5 658.1C1086.0 659.2 1086.7 662.5 1089.2 663.8C1091.7 665.1 1095.9 664.4 1098.7 665.7C1101.5 667.0 1103.6 670.1 1106.3 671.4C1109.0 672.7 1112.7 676.1 1114.9 673.3C1117.1 670.4 1118.0 657.8 1119.7 654.3C1121.5 650.8 1123.2 652.9 1125.4 652.4C1127.6 651.9 1129.8 651.6 1133.0 651.4C1136.2 651.2 1140.9 650.9 1144.4 651.4C1147.9 651.9 1151.5 652.9 1154.0 654.3C1156.5 655.7 1156.9 657.8 1159.7 660.0C1162.5 662.2 1168.2 666.2 1171.1 667.6C1173.9 669.0 1174.9 669.2 1176.8 668.6C1178.7 668.0 1180.3 664.4 1182.5 663.8C1184.7 663.2 1187.5 665.1 1190.1 664.8C1192.6 664.5 1194.0 662.2 1197.8 661.9C1201.6 661.6 1209.5 661.6 1213.0 662.9C1216.5 664.2 1217.1 667.6 1218.7 669.5C1220.3 671.4 1220.3 673.0 1222.5 674.3C1224.7 675.6 1229.1 675.4 1232.0 677.1C1234.9 678.9 1236.8 682.7 1239.7 684.8C1242.6 686.9 1245.4 688.2 1249.2 689.5C1253.0 690.8 1258.4 691.6 1262.5 692.4C1266.6 693.2 1270.8 694.3 1274.0 694.3C1277.2 694.3 1279.1 693.0 1281.6 692.4C1284.1 691.8 1286.7 690.0 1289.2 690.5C1291.7 691.0 1295.0 695.2 1296.8 695.2C1298.5 695.2 1299.2 691.3 1299.7 690.5L1303.5 454.0" fill="none" stroke="#f23645" stroke-width="1.8" stroke-linejoin="round" stroke-linecap="round"/>
<path d="M13.0 737.6C14.9 737.9 21.9 738.4 24.4 739.5C26.9 740.6 25.0 743.2 28.2 744.3C31.4 745.4 38.7 747.3 43.5 746.2C48.3 745.1 53.5 739.5 56.8 737.6C60.1 735.7 62.1 734.2 63.5 734.8C64.9 735.4 64.3 738.4 65.4 741.4C66.5 744.4 68.3 748.1 70.1 752.9C71.8 757.7 74.3 766.8 75.9 770.0C77.5 773.2 78.1 772.9 79.7 771.9C81.3 770.9 83.2 770.0 85.4 764.3C87.6 758.6 90.8 747.1 93.0 737.6C95.2 728.1 97.3 716.6 98.7 707.1C100.1 697.6 100.3 687.2 101.6 680.5C102.9 673.8 104.9 670.3 106.3 667.1C107.7 663.9 107.9 662.7 110.1 661.4C112.3 660.1 116.2 660.3 119.7 659.5C123.2 658.7 126.7 657.0 131.1 656.7C135.5 656.4 141.9 655.9 146.3 657.6C150.8 659.3 154.6 664.6 157.8 667.1C161.0 669.6 162.9 671.8 165.4 672.9C167.9 674.0 171.1 674.4 173.0 673.8C174.9 673.1 173.6 669.3 176.8 669.0C180.0 668.7 186.3 671.5 192.0 672.0C197.7 672.5 206.6 667.7 211.0 672.0C215.4 676.3 215.5 693.3 218.7 697.6C221.9 701.9 227.5 696.0 230.1 697.6C232.7 699.2 232.4 704.1 234.0 707.0C235.6 709.9 237.2 712.7 239.7 714.8C242.2 716.9 246.0 719.8 249.2 719.5C252.4 719.2 255.5 714.6 258.7 712.9C261.9 711.1 265.0 710.3 268.2 709.0C271.4 707.7 274.6 707.4 277.8 705.2C281.0 703.0 285.1 697.1 287.3 695.7C289.5 694.3 289.8 695.6 291.1 696.7C292.4 697.8 293.3 701.3 294.9 702.4C296.5 703.5 298.7 701.5 300.6 703.3C302.5 705.0 304.1 708.6 306.3 712.9C308.5 717.2 312.1 727.7 314.0 729.0C315.9 730.3 315.9 725.7 317.8 720.5C319.7 715.3 322.9 705.5 325.4 697.6C327.9 689.7 331.1 679.2 333.0 672.9C334.9 666.5 334.9 663.3 336.8 659.5C338.7 655.7 341.9 651.1 344.4 650.0C346.9 648.9 350.1 651.0 352.0 652.9C353.9 654.8 354.3 659.3 355.9 661.4C357.5 663.5 359.4 663.0 361.6 665.2C363.8 667.4 367.3 671.3 369.2 674.8C371.1 678.3 371.4 684.9 373.0 686.2C374.6 687.5 376.5 684.1 378.7 682.4C380.9 680.6 383.8 676.3 386.3 675.7C388.9 675.1 391.1 676.2 394.0 678.6C396.9 681.0 401.0 686.5 403.5 690.0C406.0 693.5 407.0 697.6 409.2 699.5C411.4 701.4 413.9 700.4 416.8 701.4C419.7 702.4 423.1 705.0 426.3 705.2C429.5 705.4 432.4 703.2 435.9 702.4C439.4 701.6 444.1 700.0 447.3 700.5C450.5 701.0 452.4 702.2 454.9 705.2C457.4 708.2 460.0 716.1 462.5 718.6C465.0 721.1 466.9 720.2 470.1 720.5C473.3 720.8 477.8 719.8 481.6 720.5C485.4 721.2 490.1 721.7 493.0 724.8C495.9 727.9 496.8 735.0 498.7 739.0C500.6 743.0 502.5 745.4 504.4 748.6C506.3 751.8 508.2 756.2 510.1 758.1C512.0 760.0 513.0 759.7 515.9 760.0C518.8 760.3 524.8 758.4 527.3 760.0C529.8 761.6 529.2 765.4 531.1 769.5C533.0 773.6 535.5 781.5 538.7 784.8C541.9 788.1 545.7 788.5 550.1 789.5C554.5 790.5 561.6 791.9 565.4 790.5C569.2 789.1 570.5 784.5 573.0 781.0C575.5 777.5 578.4 769.5 580.6 769.5C582.8 769.5 584.7 776.2 586.3 781.0C587.9 785.8 588.2 794.6 590.1 798.1C592.0 801.6 594.9 800.8 597.8 801.9C600.7 803.0 604.1 805.1 607.3 804.8C610.5 804.5 613.6 801.3 616.8 800.0C620.0 798.7 623.8 799.3 626.3 797.1C628.8 794.9 629.5 788.8 632.0 786.7C634.5 784.7 638.1 784.6 641.6 784.8C645.1 784.9 649.2 787.0 653.0 787.6C656.8 788.2 660.6 788.9 664.4 788.6C668.2 788.3 672.1 787.5 675.9 785.7C679.7 784.0 683.5 780.6 687.3 778.1C691.1 775.6 694.9 772.9 698.7 770.5C702.5 768.1 706.0 766.3 710.1 763.8C714.2 761.2 720.3 756.5 723.5 755.2C726.7 753.9 726.4 755.7 729.2 756.2C732.1 756.7 736.8 756.8 740.6 758.1C744.4 759.4 748.5 761.4 752.0 763.8C755.5 766.2 759.1 770.6 761.6 772.4C764.1 774.1 765.1 773.0 767.3 774.3C769.5 775.6 773.0 777.6 774.9 780.0C776.8 782.4 776.8 787.2 778.7 788.6C780.6 790.0 783.1 790.4 786.3 788.6C789.5 786.9 794.6 781.4 797.8 778.1C801.0 774.8 802.9 771.8 805.4 768.6C807.9 765.4 810.8 760.3 813.0 759.0C815.2 757.7 816.8 763.2 818.7 761.0C820.6 758.8 822.5 753.0 824.4 745.7C826.3 738.4 828.2 726.0 830.1 717.1C832.0 708.2 834.0 697.0 835.9 692.4C837.8 687.8 839.7 689.2 841.6 689.5C843.5 689.8 845.4 688.7 847.3 694.3C849.2 699.9 851.4 715.9 853.0 722.9C854.6 729.9 855.5 732.9 856.8 736.2C858.1 739.5 859.0 742.9 860.6 742.9C862.2 742.9 864.1 737.6 866.3 736.2C868.5 734.8 870.8 735.6 874.0 734.3C877.2 733.0 881.6 731.0 885.4 728.6C889.2 726.2 893.9 721.0 896.8 720.0C899.6 719.0 900.6 720.8 902.5 722.9C904.4 725.0 906.6 730.2 908.2 732.4C909.8 734.6 909.8 736.2 912.0 736.2C914.2 736.2 919.1 734.3 921.6 732.4C924.1 730.5 925.1 729.6 927.3 724.8C929.5 720.0 932.4 705.1 934.9 703.8C937.4 702.5 940.6 712.8 942.5 717.1C944.4 721.4 943.8 727.6 946.3 729.5C948.8 731.4 954.6 729.4 957.8 728.6C961.0 727.8 962.9 725.9 965.4 724.8C967.9 723.7 970.5 722.2 973.0 721.9C975.5 721.6 978.1 720.8 980.6 722.9C983.1 725.0 986.0 731.1 988.2 734.3C990.4 737.5 992.1 739.0 994.0 741.9C995.9 744.8 997.8 748.5 999.7 751.4C1001.6 754.2 1002.9 758.0 1005.4 759.0C1007.9 760.0 1012.4 755.8 1014.9 757.1C1017.4 758.4 1018.7 763.8 1020.6 766.7C1022.5 769.6 1024.4 773.7 1026.3 774.3C1028.2 774.9 1029.8 773.7 1032.0 770.5C1034.2 767.3 1037.5 761.6 1039.7 755.2C1041.9 748.9 1043.5 738.9 1045.4 732.4C1047.3 725.9 1048.9 719.4 1051.1 716.2C1053.3 713.0 1055.8 713.3 1058.7 713.3C1061.6 713.3 1065.0 716.2 1068.2 716.2C1071.4 716.2 1074.9 715.4 1077.8 713.3C1080.7 711.2 1083.5 707.3 1085.4 703.8C1087.3 700.3 1087.0 694.6 1089.2 692.4C1091.4 690.2 1094.6 690.8 1098.7 690.5C1102.8 690.2 1110.8 689.7 1114.0 690.5C1117.2 691.3 1115.9 694.4 1117.8 695.2C1119.7 696.0 1122.9 695.4 1125.4 695.2C1127.9 695.1 1129.8 695.1 1133.0 694.3C1136.2 693.5 1140.9 691.9 1144.4 690.5C1147.9 689.1 1151.5 685.7 1154.0 685.7C1156.5 685.7 1156.9 688.9 1159.7 690.5C1162.5 692.1 1167.9 694.2 1171.1 695.2C1174.3 696.2 1175.5 695.7 1178.7 696.2C1181.9 696.7 1187.5 696.8 1190.1 698.1C1192.6 699.4 1191.5 703.3 1194.0 703.8C1196.5 704.3 1202.2 701.1 1205.4 701.0C1208.6 700.9 1209.8 702.4 1213.0 702.9C1216.2 703.4 1220.6 703.8 1224.4 703.8C1228.2 703.8 1232.1 701.9 1235.9 702.9C1239.7 703.9 1244.1 708.4 1247.3 709.5C1250.5 710.6 1251.7 709.6 1254.9 709.5C1258.1 709.4 1263.1 708.6 1266.3 708.6C1269.5 708.6 1271.5 707.8 1274.0 709.5C1276.5 711.2 1278.8 716.6 1281.6 719.0C1284.4 721.4 1288.2 723.0 1291.1 723.8C1293.9 724.6 1297.4 723.8 1298.7 723.8L1300.5 896.0" fill="none" stroke="#089981" stroke-width="1.8" stroke-linejoin="round" stroke-linecap="round"/>
<line x1="14" y1="351.5" x2="1446" y2="351.5" stroke="#f23645" stroke-width="1" stroke-dasharray="1.6,2.6"/>
<text x="1457.5" y="57.3" font-size="16" fill="#c4c4c4" stroke="#c4c4c4" stroke-width="0.3" textLength="114.3" lengthAdjust="spacingAndGlyphs">150.00000000</text>
<text x="1457.5" y="121.3" font-size="16" fill="#c4c4c4" stroke="#c4c4c4" stroke-width="0.3" textLength="114.3" lengthAdjust="spacingAndGlyphs">140.00000000</text>
<text x="1457.5" y="185.3" font-size="16" fill="#c4c4c4" stroke="#c4c4c4" stroke-width="0.3" textLength="114.3" lengthAdjust="spacingAndGlyphs">130.00000000</text>
<text x="1457.5" y="249.3" font-size="16" fill="#c4c4c4" stroke="#c4c4c4" stroke-width="0.3" textLength="114.3" lengthAdjust="spacingAndGlyphs">120.00000000</text>
<text x="1457.5" y="313.3" font-size="16" fill="#c4c4c4" stroke="#c4c4c4" stroke-width="0.3" textLength="114.3" lengthAdjust="spacingAndGlyphs">110.00000000</text>
<text x="1457.5" y="441.3" font-size="16" fill="#c4c4c4" stroke="#c4c4c4" stroke-width="0.3" textLength="104.5" lengthAdjust="spacingAndGlyphs">90.00000000</text>
<text x="1457.5" y="505.3" font-size="16" fill="#c4c4c4" stroke="#c4c4c4" stroke-width="0.3" textLength="104.5" lengthAdjust="spacingAndGlyphs">80.00000000</text>
<text x="1457.5" y="570.3" font-size="16" fill="#c4c4c4" stroke="#c4c4c4" stroke-width="0.3" textLength="104.5" lengthAdjust="spacingAndGlyphs">70.00000000</text>
<text x="1457.5" y="634.3" font-size="16" fill="#c4c4c4" stroke="#c4c4c4" stroke-width="0.3" textLength="104.5" lengthAdjust="spacingAndGlyphs">60.00000000</text>
<text x="1457.5" y="762.3" font-size="16" fill="#c4c4c4" stroke="#c4c4c4" stroke-width="0.3" textLength="104.5" lengthAdjust="spacingAndGlyphs">40.00000000</text>
<text x="1457.5" y="826.3" font-size="16" fill="#c4c4c4" stroke="#c4c4c4" stroke-width="0.3" textLength="104.5" lengthAdjust="spacingAndGlyphs">30.00000000</text>
<text x="1457.5" y="890.3" font-size="16" fill="#c4c4c4" stroke="#c4c4c4" stroke-width="0.3" textLength="104.5" lengthAdjust="spacingAndGlyphs">20.00000000</text>
<text x="1457.5" y="954.3" font-size="16" fill="#c4c4c4" stroke="#c4c4c4" stroke-width="0.3" textLength="104.5" lengthAdjust="spacingAndGlyphs">10.00000000</text>
<path d="M1445 340.3H1576.7Q1579.7 340.3 1579.7 343.3V378.7Q1579.7 381.7 1576.7 381.7H1445Z" fill="#f23645" stroke="#0f0f0f" stroke-width="1"/>
<text x="1458" y="357" font-size="16" fill="#ffffff" stroke="#ffffff" stroke-width="0.3" textLength="114.4" lengthAdjust="spacingAndGlyphs">102.97575535</text>
<text x="1458" y="376" font-size="16" fill="#ffffff" stroke="#ffffff" stroke-width="0.3" textLength="68" lengthAdjust="spacingAndGlyphs">12:36:05</text>
<path d="M1445 443.4H1567.5Q1570.5 443.4 1570.5 446.4V463Q1570.5 466 1567.5 466H1445Z" fill="#f23645" stroke="#0f0f0f" stroke-width="1"/>
<text x="1457" y="459.4" font-size="16" fill="#ffffff" stroke="#ffffff" stroke-width="0.3" textLength="104.5" lengthAdjust="spacingAndGlyphs">86.98193251</text>
<path d="M1445 634.2H1567.5Q1570.5 634.2 1570.5 637.2V653.6Q1570.5 656.6 1567.5 656.6H1445Z" fill="#ff0000" stroke="#0f0f0f" stroke-width="1"/>
<text x="1457" y="650.6" font-size="16" fill="#ffffff" stroke="#ffffff" stroke-width="0.3" textLength="104.5" lengthAdjust="spacingAndGlyphs">57.26046903</text>
<path d="M1445 663.3H1567.5Q1570.5 663.3 1570.5 666.3V682.6Q1570.5 685.6 1567.5 685.6H1445Z" fill="#3d5afe" stroke="#0f0f0f" stroke-width="1"/>
<text x="1457" y="679.6" font-size="16" fill="#ffffff" stroke="#ffffff" stroke-width="0.3" textLength="104.5" lengthAdjust="spacingAndGlyphs">52.58638671</text>
<path d="M1445 686.5H1567.5Q1570.5 686.5 1570.5 689.5V705.6Q1570.5 708.6 1567.5 708.6H1445Z" fill="#ff7f00" stroke="#0f0f0f" stroke-width="1"/>
<text x="1457" y="702.6" font-size="16" fill="#ffffff" stroke="#ffffff" stroke-width="0.3" textLength="104.5" lengthAdjust="spacingAndGlyphs">52.37433236</text>
<path d="M1445 709.6H1567.5Q1570.5 709.6 1570.5 712.6V728.8Q1570.5 731.8 1567.5 731.8H1445Z" fill="#00ffff" stroke="#0f0f0f" stroke-width="1"/>
<text x="1457" y="725.8" font-size="16" fill="#000000" stroke="#000000" stroke-width="0.3" textLength="104.5" lengthAdjust="spacingAndGlyphs">51.21864191</text>
<path d="M1445 732.5H1567.5Q1570.5 732.5 1570.5 735.5V751.3Q1570.5 754.3 1567.5 754.3H1445Z" fill="#0000ff" stroke="#0f0f0f" stroke-width="1"/>
<text x="1457" y="748.3" font-size="16" fill="#ffffff" stroke="#ffffff" stroke-width="0.3" textLength="104.5" lengthAdjust="spacingAndGlyphs">50.31882563</text>
<path d="M1445 884.4H1567.7Q1570.7 884.4 1570.7 887.4V904.2Q1570.7 907.2 1567.7 907.2H1445Z" fill="#089981" stroke="#0f0f0f" stroke-width="1"/>
<text x="1457.6" y="901" font-size="16" fill="#ffffff" stroke="#ffffff" stroke-width="0.3" textLength="104.5" lengthAdjust="spacingAndGlyphs">18.19084090</text>
<text x="58.4" y="1010.2" font-size="16" fill="#c4c4c4" stroke="#c4c4c4" stroke-width="0.3" text-anchor="middle">Nov</text>
<text x="174.8" y="1010.2" font-size="16" fill="#c4c4c4" stroke="#c4c4c4" stroke-width="0.3" textLength="41.5" lengthAdjust="spacingAndGlyphs" font-weight="bold" text-anchor="middle">2024</text>
<text x="289.2" y="1010.2" font-size="16" fill="#c4c4c4" stroke="#c4c4c4" stroke-width="0.3" text-anchor="middle">Mar</text>
<text x="405.8" y="1010.2" font-size="16" fill="#c4c4c4" stroke="#c4c4c4" stroke-width="0.3" text-anchor="middle">May</text>
<text x="522.6" y="1010.2" font-size="16" fill="#c4c4c4" stroke="#c4c4c4" stroke-width="0.3" text-anchor="middle">Jul</text>
<text x="640.6" y="1010.2" font-size="16" fill="#c4c4c4" stroke="#c4c4c4" stroke-width="0.3" text-anchor="middle">Sep</text>
<text x="757.4" y="1010.2" font-size="16" fill="#c4c4c4" stroke="#c4c4c4" stroke-width="0.3" text-anchor="middle">Nov</text>
<text x="874" y="1010.2" font-size="16" fill="#c4c4c4" stroke="#c4c4c4" stroke-width="0.3" textLength="41.5" lengthAdjust="spacingAndGlyphs" font-weight="bold" text-anchor="middle">2025</text>
<text x="986.3" y="1010.2" font-size="16" fill="#c4c4c4" stroke="#c4c4c4" stroke-width="0.3" text-anchor="middle">Mar</text>
<text x="1102.9" y="1010.2" font-size="16" fill="#c4c4c4" stroke="#c4c4c4" stroke-width="0.3" text-anchor="middle">May</text>
<text x="1219.3" y="1010.2" font-size="16" fill="#c4c4c4" stroke="#c4c4c4" stroke-width="0.3" text-anchor="middle">Jul</text>
<text x="1338" y="1010.2" font-size="16" fill="#c4c4c4" stroke="#c4c4c4" stroke-width="0.3" text-anchor="middle">Sep</text>
<text x="13.5" y="26.9" font-size="16.5" fill="#dedede" stroke="#dedede" stroke-width="0.3" textLength="547.2" lengthAdjust="spacingAndGlyphs">ChartAnalysis_4 created with TradingView.com, Aug 14, 2025 11:23 UTC</text>
<text x="24.5" y="63.4" font-size="16" fill="#d1d1d1" stroke="#d1d1d1" stroke-width="0.3" textLength="226.5" lengthAdjust="spacingAndGlyphs">OKB / US DOLLAR · 1D · PYTH</text>
<text x="261" y="63.4" font-size="16" fill="#d1d1d1" stroke="#d1d1d1" stroke-width="0.3">O</text>
<text x="274" y="63.4" font-size="16" fill="#f23645" stroke="#f23645" stroke-width="0.3" textLength="102" lengthAdjust="spacingAndGlyphs">105.17118536</text>
<text x="386.4" y="63.4" font-size="16" fill="#d1d1d1" stroke="#d1d1d1" stroke-width="0.3">H</text>
<text x="400" y="63.4" font-size="16" fill="#f23645" stroke="#f23645" stroke-width="0.3" textLength="107" lengthAdjust="spacingAndGlyphs">114.83308668</text>
<text x="518.7" y="63.4" font-size="16" fill="#d1d1d1" stroke="#d1d1d1" stroke-width="0.3">L</text>
<text x="527.3" y="63.4" font-size="16" fill="#f23645" stroke="#f23645" stroke-width="0.3" textLength="98.7" lengthAdjust="spacingAndGlyphs">101.19199101</text>
<text x="635.7" y="63.4" font-size="16" fill="#d1d1d1" stroke="#d1d1d1" stroke-width="0.3">C</text>
<text x="648" y="63.4" font-size="16" fill="#f23645" stroke="#f23645" stroke-width="0.3" textLength="108" lengthAdjust="spacingAndGlyphs">102.97575535</text>
<text x="766" y="63.4" font-size="16" fill="#f23645" stroke="#f23645" stroke-width="0.3" textLength="174.5" lengthAdjust="spacingAndGlyphs">−2.20728783 (−2.10%)</text>
<text x="24.5" y="86" font-size="16" fill="#d1d1d1" stroke="#d1d1d1" stroke-width="0.3" textLength="150.5" lengthAdjust="spacingAndGlyphs">EMA 20/50/100/200</text>
<text x="185.6" y="86" font-size="16" fill="#ff0000" stroke="#ff0000" stroke-width="0.3" textLength="101.4" lengthAdjust="spacingAndGlyphs">57.26046903</text>
<text x="298" y="86" font-size="16" fill="#ff8000" stroke="#ff8000" stroke-width="0.3" textLength="101.4" lengthAdjust="spacingAndGlyphs">52.37433236</text>
<text x="409.6" y="86" font-size="16" fill="#00e5e5" stroke="#00e5e5" stroke-width="0.3" textLength="92.4" lengthAdjust="spacingAndGlyphs">51.21864191</text>
<text x="513.8" y="86" font-size="16" fill="#0000ff" stroke="#0000ff" stroke-width="0.3" textLength="100.2" lengthAdjust="spacingAndGlyphs">50.31882563</text>
<text x="24.5" y="109" font-size="16" fill="#d1d1d1" stroke="#d1d1d1" stroke-width="0.3" textLength="169" lengthAdjust="spacingAndGlyphs">BB (20, SMA, close, 2)</text>
<text x="204.4" y="109" font-size="16" fill="#2962ff" stroke="#2962ff" stroke-width="0.3" textLength="100" lengthAdjust="spacingAndGlyphs">52.58638671</text>
<text x="315" y="109" font-size="16" fill="#f23645" stroke="#f23645" stroke-width="0.3" textLength="98" lengthAdjust="spacingAndGlyphs">86.98193251</text>
<text x="423.6" y="109" font-size="16" fill="#089981" stroke="#089981" stroke-width="0.3" textLength="98.8" lengthAdjust="spacingAndGlyphs">18.19084090</text>
<circle cx="1303.2" cy="934" r="13.2" fill="#0f0f0f" stroke="#b44bd6" stroke-width="2"/>
<path d="M1307.2 927.2L1297.8 934.6L1308.4 933.4L1298.8 941.2" fill="none" stroke="#b44bd6" stroke-width="2" stroke-linejoin="miter"/>
<circle cx="1312.3" cy="924.5" r="5.8" fill="#0f0f0f"/>
<circle cx="1312.3" cy="924.5" r="3.7" fill="#f23645"/>
<clipPath id="fb"><circle cx="1314.3" cy="966.6" r="10.6"/></clipPath><g clip-path="url(#fb)"><rect x="1302.3" y="954.6" width="24" height="24" fill="#f4f4f4"/><rect x="1302.3" y="956.1" width="24" height="3" fill="#e8443e"/><rect x="1302.3" y="962.1" width="24" height="3" fill="#e8443e"/><rect x="1302.3" y="968.1" width="24" height="3" fill="#e8443e"/><rect x="1302.3" y="974.1" width="24" height="3" fill="#e8443e"/><rect x="1302.3" y="954.6" width="11.5" height="11.5" fill="#3b6fe0"/><rect x="1305.8" y="957.6" width="1.2" height="1.2" fill="#ffffff"/><rect x="1305.8" y="960.6" width="1.2" height="1.2" fill="#ffffff"/><rect x="1305.8" y="963.6" width="1.2" height="1.2" fill="#ffffff"/><rect x="1308.8" y="957.6" width="1.2" height="1.2" fill="#ffffff"/><rect x="1308.8" y="960.6" width="1.2" height="1.2" fill="#ffffff"/><rect x="1308.8" y="963.6" width="1.2" height="1.2" fill="#ffffff"/><rect x="1311.8" y="957.6" width="1.2" height="1.2" fill="#ffffff"/><rect x="1311.8" y="960.6" width="1.2" height="1.2" fill="#ffffff"/><rect x="1311.8" y="963.6" width="1.2" height="1.2" fill="#ffffff"/></g>
<circle cx="1314.3" cy="966.6" r="11.8" fill="none" stroke="#f23645" stroke-width="2.2"/>
<circle cx="1303.2" cy="966.6" r="14.3" fill="#0f0f0f"/>
<clipPath id="ff"><circle cx="1303.2" cy="966.6" r="10.6"/></clipPath><g clip-path="url(#ff)"><rect x="1291.2" y="954.6" width="24" height="24" fill="#f4f4f4"/><rect x="1291.2" y="956.1" width="24" height="3" fill="#e8443e"/><rect x="1291.2" y="962.1" width="24" height="3" fill="#e8443e"/><rect x="1291.2" y="968.1" width="24" height="3" fill="#e8443e"/><rect x="1291.2" y="974.1" width="24" height="3" fill="#e8443e"/><rect x="1291.2" y="954.6" width="11.5" height="11.5" fill="#3b6fe0"/><rect x="1294.7" y="957.6" width="1.2" height="1.2" fill="#ffffff"/><rect x="1294.7" y="960.6" width="1.2" height="1.2" fill="#ffffff"/><rect x="1294.7" y="963.6" width="1.2" height="1.2" fill="#ffffff"/><rect x="1297.7" y="957.6" width="1.2" height="1.2" fill="#ffffff"/><rect x="1297.7" y="960.6" width="1.2" height="1.2" fill="#ffffff"/><rect x="1297.7" y="963.6" width="1.2" height="1.2" fill="#ffffff"/><rect x="1300.7" y="957.6" width="1.2" height="1.2" fill="#ffffff"/><rect x="1300.7" y="960.6" width="1.2" height="1.2" fill="#ffffff"/><rect x="1300.7" y="963.6" width="1.2" height="1.2" fill="#ffffff"/></g>
<circle cx="1303.2" cy="966.6" r="11.8" fill="none" stroke="#f23645" stroke-width="2.2"/>
<path d="M16.2 1051.4H31.9V1071.8H23.9V1060H16.2Z" fill="#e2e2e2"/>
<circle cx="38.9" cy="1055.7" r="3.9" fill="#e2e2e2"/>
<path d="M46 1051.4H56.1L49 1071.8H39.1Z" fill="#e2e2e2"/>
<text x="66" y="1071.6" font-size="27.5" fill="#e2e2e2" stroke="#e2e2e2" stroke-width="0.3" textLength="162.2" lengthAdjust="spacingAndGlyphs" font-weight="bold">TradingView</text>
</svg></body></html>
